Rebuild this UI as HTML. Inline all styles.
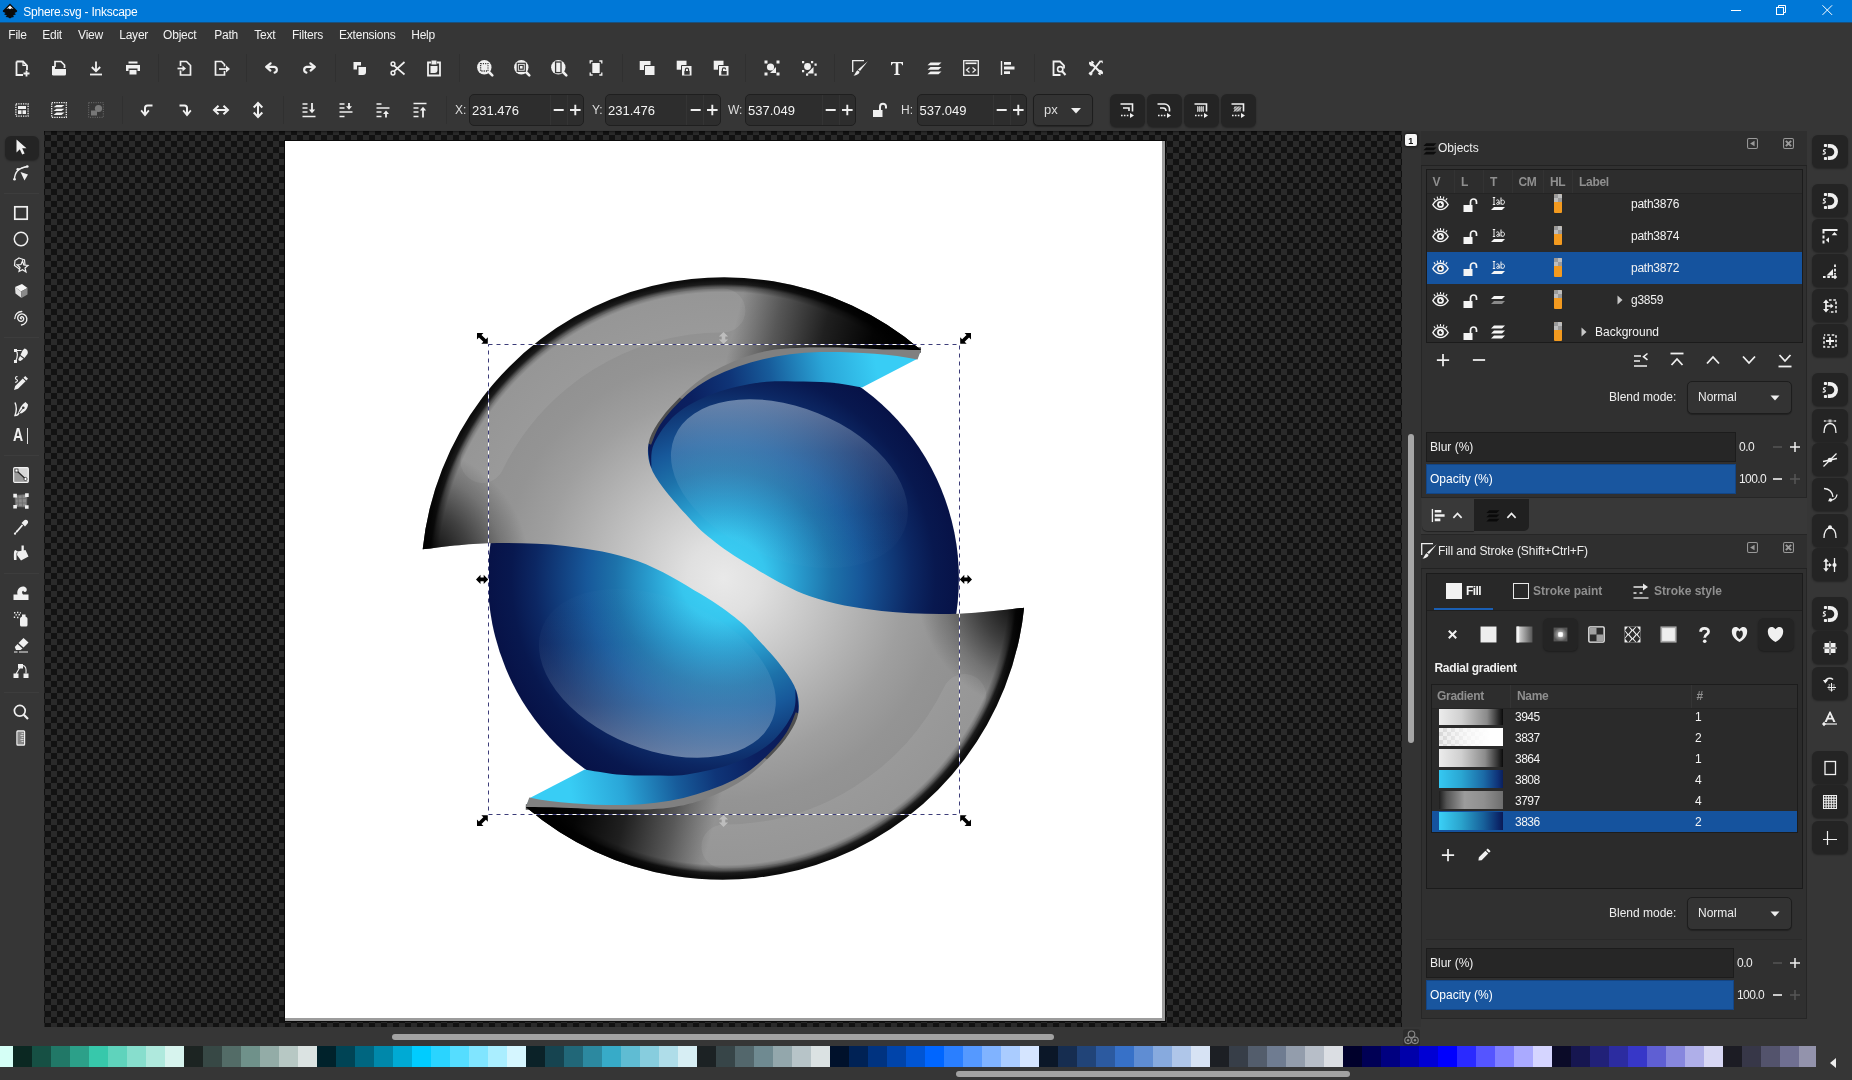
<!DOCTYPE html><html><head><meta charset="utf-8"><title>Sphere.svg - Inkscape</title><style>

html,body{margin:0;padding:0;}
body{width:1852px;height:1080px;overflow:hidden;background:#363636;position:relative;font-family:"Liberation Sans", "DejaVu Sans", sans-serif;font-size:12px;color:#eeeeec;}
.b{position:absolute;box-sizing:border-box;}
.t{position:absolute;height:20px;line-height:20px;white-space:nowrap;font-size:12px;}
.ic{position:absolute;overflow:visible;}
.m{font-size:12px;letter-spacing:-0.22px;color:#f2f2f2;}
.hd{font-weight:bold;color:#8f8f8f;letter-spacing:-0.3px;}
.dim{color:#8f8f8f;}
.btn{background:#242424;border-radius:6px;box-shadow:0 1px 2px rgba(0,0,0,.35);}
.entry{background:#2d2d2d;border:1px solid #1f1f1f;border-radius:5px;}
.combo{background:#333;border:1px solid #1d1d1d;border-radius:5px;box-shadow:0 1px 1px rgba(0,0,0,.3);}
.sep{background:#303030;width:1px;}

</style></head><body><div id="w" style="position:absolute;left:0;top:0;width:1852px;height:1080px;will-change:transform;">
<div class="b " style="left:0px;top:0px;width:1852px;height:23px;background:#0078d7;border-bottom:1px solid #1b4f7a;"></div>
<svg class="ic" style="left:1.5px;top:3.2px;color:#111;" width="16" height="16" viewBox="0 0 16 16"><path d="M8 0.500 L15 7.500 C15.500 8.200 15 9 14 9.300 L12.500 10 L14 11.200 L11 12.500 L12 14 L9.500 14.500 L8 15.500 L6 14.300 L3.500 14 L5 12.600 L2 11.300 L3.600 10 L2 9.300 C1 9 0.500 8.200 1 7.500 Z" fill="#0b0b0b"/><path d="M8 2.500 L11.500 6 L9.500 5.300 L8 6.300 L6.500 5.300 L4.500 6 Z" fill="#fff"/></svg>
<div class="t " style="left:23.3px;top:1.5px;color:#fff;font-size:12px;letter-spacing:-0.25px;">Sphere.svg - Inkscape</div>
<svg class="ic" style="left:1720px;top:0" width="132" height="22" viewBox="0 0 132 22"><g stroke="#fff" stroke-width="1" fill="none"><path d="M11 10.5h10"/><rect x="56.5" y="7.5" width="7" height="7"/><path d="M58.5 7.5v-2h7v7h-2"/><path d="M102.500 5.300l9.600 9.600M112.100 5.300l-9.600 9.600"/></g></svg>
<div class="t m" style="left:8.3px;top:24.5px;">File</div>
<div class="t m" style="left:42.2px;top:24.5px;">Edit</div>
<div class="t m" style="left:78.1px;top:24.5px;">View</div>
<div class="t m" style="left:119.2px;top:24.5px;">Layer</div>
<div class="t m" style="left:163.1px;top:24.5px;">Object</div>
<div class="t m" style="left:214.2px;top:24.5px;">Path</div>
<div class="t m" style="left:254.3px;top:24.5px;">Text</div>
<div class="t m" style="left:292px;top:24.5px;">Filters</div>
<div class="t m" style="left:339px;top:24.5px;">Extensions</div>
<div class="t m" style="left:411.2px;top:24.5px;">Help</div>
<svg class="ic" style="left:14.0px;top:60.0px;color:#f0f0f0;" width="16" height="16" viewBox="0 0 16 16"><path d="M2.500 1.500 h6.500 l4 4 v4.500 M2.500 1.500 v13.500 h6.500" fill="none" stroke="currentColor" stroke-width="1.800"/><path d="M9 1.500 v4 h4" fill="none" stroke="currentColor" stroke-width="1.200"/><path d="M12.500 10.500 v6 M9.500 13.500 h6" fill="none" stroke="currentColor" stroke-width="1.800"/></svg>
<svg class="ic" style="left:51.0px;top:60.0px;color:#f0f0f0;" width="16" height="16" viewBox="0 0 16 16"><path d="M4 7 v-5.500 h6 l3.500 3.500 v3" fill="none" stroke="currentColor" stroke-width="1.700"/><path d="M1 6 h3 v3 h11 v5 a1.500 1.500 0 0 1 -1.500 1.500 h-11 a1.500 1.500 0 0 1 -1.500 -1.500 z" fill="currentColor"/><path d="M1.800 6 v9" fill="none" stroke="currentColor" stroke-width="1.600"/></svg>
<svg class="ic" style="left:88.0px;top:60.0px;color:#f0f0f0;" width="16" height="16" viewBox="0 0 16 16"><path d="M8 1.500 v9.500 M3.800 7 l4.200 4.200 l4.200 -4.200" fill="none" stroke="currentColor" stroke-width="1.800"/><path d="M2 14.500 h12" fill="none" stroke="currentColor" stroke-width="1.800"/></svg>
<svg class="ic" style="left:125.0px;top:60.0px;color:#f0f0f0;" width="16" height="16" viewBox="0 0 16 16"><path d="M3.500 1.500 h9 v2 h-9z" fill="currentColor"/><path d="M1 5 h14 v6 h-2.500 v-2.500 h-9 v2.500 h-2.500z" fill="currentColor"/><path d="M4.500 10 h7 v4.500 h-7z" fill="currentColor"/></svg>
<svg class="ic" style="left:177.0px;top:60.0px;color:#f0f0f0;" width="16" height="16" viewBox="0 0 16 16"><path d="M3.500 6 v-4.500 h6 l4 4 v9.500 h-10 v-4.500" fill="none" stroke="currentColor" stroke-width="1.700"/><path d="M0.500 8.500 h6" fill="none" stroke="currentColor" stroke-width="1.700"/><path d="M5.500 5.500 l3.500 3 l-3.500 3z" fill="currentColor"/></svg>
<svg class="ic" style="left:213.5px;top:60.0px;color:#f0f0f0;" width="16" height="16" viewBox="0 0 16 16"><path d="M10.500 11 v4 h-9 v-13.500 h6 l3 3 v2" fill="none" stroke="currentColor" stroke-width="1.700"/><path d="M5 9 h8" fill="none" stroke="currentColor" stroke-width="1.700"/><path d="M12 5.500 l4 3.500 l-4 3.500z" fill="currentColor"/></svg>
<svg class="ic" style="left:264.0px;top:60.0px;color:#f0f0f0;" width="16" height="16" viewBox="0 0 16 16"><path d="M6.600 3.300 L2.200 6.900 L6.400 10.600" fill="none" stroke="currentColor" stroke-width="2.200" stroke-linejoin="round" stroke-linecap="round"/><path d="M2.800 6.900 H10.300 A2.900 2.900 0 0 1 10.600 12.600" fill="none" stroke="currentColor" stroke-width="2.200" stroke-linecap="round"/></svg>
<svg class="ic" style="left:301.0px;top:60.0px;color:#f0f0f0;" width="16" height="16" viewBox="0 0 16 16"><path d="M9.400 3.300 L13.800 6.900 L9.600 10.600" fill="none" stroke="currentColor" stroke-width="2.200" stroke-linejoin="round" stroke-linecap="round"/><path d="M13.200 6.900 H5.700 A2.900 2.900 0 0 0 5.400 12.600" fill="none" stroke="currentColor" stroke-width="2.200" stroke-linecap="round"/></svg>
<svg class="ic" style="left:352.0px;top:60.0px;color:#f0f0f0;" width="16" height="16" viewBox="0 0 16 16"><path d="M1.500 2 h7.500 v3.500 h-4 v4 h-3.500z" fill="currentColor"/><path d="M6.500 7 h7.500 v5 a3 3 0 0 1 -3 3 h-4.500z" fill="currentColor"/></svg>
<svg class="ic" style="left:389.5px;top:60.0px;color:#f0f0f0;" width="16" height="16" viewBox="0 0 16 16"><path d="M3.800 5.300 L14.500 14.500 M3.800 11.700 L14.500 2" fill="none" stroke="currentColor" stroke-width="1.700"/><circle cx="3" cy="4" r="1.900" fill="none" stroke="currentColor" stroke-width="1.500"/><circle cx="3" cy="13" r="1.900" fill="none" stroke="currentColor" stroke-width="1.500"/></svg>
<svg class="ic" style="left:426.0px;top:60.0px;color:#f0f0f0;" width="16" height="16" viewBox="0 0 16 16"><path d="M5 2.500 h-3 v13 h12 v-13 h-3" fill="none" stroke="currentColor" stroke-width="1.800"/><path d="M5.500 0.500 h5 v4 h-5z" fill="currentColor"/><path d="M4.500 6 h7 v4 a3 3 0 0 1 -3 3 h-4z" fill="currentColor"/></svg>
<svg class="ic" style="left:477.0px;top:60.0px;color:#f0f0f0;" width="16" height="16" viewBox="0 0 16 16"><path d="M12 12 L15.300 15.300" fill="none" stroke="currentColor" stroke-width="2.600" stroke-linecap="round"/><circle cx="7.300" cy="7.300" r="7.200" fill="currentColor"/><rect x="3.600" y="3.600" width="7.400" height="7.400" fill="none" stroke="#363636" stroke-width="1.300" stroke-dasharray="1.150 1.100"/></svg>
<svg class="ic" style="left:514.0px;top:60.0px;color:#f0f0f0;" width="16" height="16" viewBox="0 0 16 16"><path d="M12 12 L15.300 15.300" fill="none" stroke="currentColor" stroke-width="2.600" stroke-linecap="round"/><circle cx="7.300" cy="7.300" r="7.200" fill="currentColor"/><rect x="3.300" y="3.300" width="8" height="8" fill="none" stroke="#363636" stroke-width="1.200"/><rect x="5.400" y="5.400" width="3.800" height="3.800" fill="none" stroke="#363636" stroke-width="1.200"/></svg>
<svg class="ic" style="left:551.0px;top:60.0px;color:#f0f0f0;" width="16" height="16" viewBox="0 0 16 16"><path d="M12 12 L15.300 15.300" fill="none" stroke="currentColor" stroke-width="2.600" stroke-linecap="round"/><circle cx="7.300" cy="7.300" r="7.200" fill="currentColor"/><rect x="4.600" y="2" width="5.400" height="10.600" fill="none" stroke="#363636" stroke-width="1.300"/></svg>
<svg class="ic" style="left:588.0px;top:60.0px;color:#f0f0f0;" width="16" height="16" viewBox="0 0 16 16"><rect x="4.300" y="3" width="7.400" height="10" fill="currentColor"/><path d="M2.200 3.500 v-2.500 h2.500 M13.800 3.500 v-2.500 h-2.500 M2.200 12.500 v2.500 h2.500 M13.800 12.500 v2.500 h-2.500" fill="none" stroke="currentColor" stroke-width="1.300"/></svg>
<svg class="ic" style="left:638.5px;top:60.0px;color:#f0f0f0;" width="16" height="16" viewBox="0 0 16 16"><path d="M0.700 1 h10.800 v9 h-10.800z" fill="currentColor"/><path d="M5.500 5.500 h10.500 v10 h-10.500z" fill="currentColor" stroke="#363636" stroke-width="1"/></svg>
<svg class="ic" style="left:675.5px;top:60.0px;color:#f0f0f0;" width="16" height="16" viewBox="0 0 16 16"><path d="M0.700 0.700 h9.800 v9 h-9.800z" fill="currentColor"/><path d="M5.500 5.500 h10.500 v10.500 h-10.500z" fill="currentColor" stroke="#363636" stroke-width="1"/><path d="M8.300 11 h5.400 v3.700 h-5.400z" fill="#363636"/><path d="M9.400 11 v-1.300 a1.600 1.600 0 0 1 3.200 0 v1.300" fill="none" stroke="#363636" stroke-width="1.200"/></svg>
<svg class="ic" style="left:712.5px;top:60.0px;color:#f0f0f0;" width="16" height="16" viewBox="0 0 16 16"><path d="M0.700 0.700 h9.800 v9 h-9.800z" fill="currentColor"/><path d="M5.500 5.500 h10.500 v10.500 h-10.500z" fill="currentColor" stroke="#363636" stroke-width="1"/><path d="M8.300 11 h5.400 v3.700 h-5.400z" fill="#363636"/><path d="M9.400 11 v-1.600 a1.600 1.600 0 0 1 3.200 0" fill="none" stroke="#363636" stroke-width="1.200"/></svg>
<svg class="ic" style="left:764.0px;top:60.0px;color:#f0f0f0;" width="16" height="16" viewBox="0 0 16 16"><circle cx="6.500" cy="7" r="3.600" fill="currentColor"/><path d="M12 7 v6 h-6 z" fill="currentColor"/><path d="M0.500 0.500 h3 v3 h-3z M12.500 0.500 h3 v3 h-3z M0.500 12.500 h3 v3 h-3z M12.500 12.500 h3 v3 h-3z" fill="currentColor"/></svg>
<svg class="ic" style="left:801.0px;top:60.0px;color:#f0f0f0;" width="16" height="16" viewBox="0 0 16 16"><circle cx="6.500" cy="6.500" r="3.400" fill="currentColor"/><path d="M12.500 7 v6.500 h-6.500 z" fill="currentColor"/><path d="M1 1 h2.200 v2.200 h-2.200z M10 1 h2.200 v2.200 h-2.200z M1 10 h2.200 v2.200 h-2.200z M13.500 3.500 h2.200 v2.200 h-2.200z M5 13.500 h2.200 v2.200 h-2.200z M13.500 13.500 h2.200 v2.200 h-2.200z" fill="currentColor"/></svg>
<svg class="ic" style="left:852.0px;top:60.0px;color:#f0f0f0;" width="16" height="16" viewBox="0 0 16 16"><path d="M12 0.700 h-11.300 v11.300" fill="none" stroke="currentColor" stroke-width="1.300"/><path d="M15.800 1.200 L8 11 L6 9.600 Z" fill="currentColor"/><path d="M5.500 10.200 l2 1.600 c0 2 -2.500 3.700 -6 3.700 c1.800 -1 2 -3.800 4 -5.300z" fill="currentColor"/></svg>
<svg class="ic" style="left:889.0px;top:60.0px;color:#f0f0f0;" width="16" height="16" viewBox="0 0 16 16"><path d="M2 2 h12 v3.200 h-0.800 c-0.300 -1.400 -0.900 -1.900 -2.200 -1.900 h-1.700 v9.700 c0 0.900 0.400 1.200 1.700 1.300 v0.700 h-6 v-0.700 c1.300 -0.100 1.700 -0.400 1.700 -1.300 v-9.700 h-1.700 c-1.300 0 -1.900 0.500 -2.200 1.900 h-0.800z" fill="currentColor"/></svg>
<svg class="ic" style="left:926.0px;top:60.0px;color:#f0f0f0;" width="16" height="16" viewBox="0 0 16 16"><path d="M4.500 2.500 h11 l-3 2.800 h-11z M4.500 7 h11 l-3 2.800 h-11z M4.500 11.500 h11 l-3 2.800 h-11z" fill="currentColor"/></svg>
<svg class="ic" style="left:963.0px;top:60.0px;color:#f0f0f0;" width="16" height="16" viewBox="0 0 16 16"><rect x="0.700" y="0.700" width="14.600" height="14.600" fill="none" stroke="currentColor" stroke-width="1.300"/><path d="M2.500 3.300 h11" fill="none" stroke="currentColor" stroke-width="1.600"/><path d="M6.500 7.500 l-3 2.500 l3 2.500 M9.500 7.500 l3 2.500 l-3 2.500" fill="none" stroke="currentColor" stroke-width="1.200"/></svg>
<svg class="ic" style="left:999.5px;top:60.0px;color:#f0f0f0;" width="16" height="16" viewBox="0 0 16 16"><path d="M1.500 1 v14" fill="none" stroke="currentColor" stroke-width="1.400"/><path d="M4 2 h7 v2.800 h-7z M4 6.600 h10.500 v2.800 h-10.500z M4 11.200 h6 v2.800 h-6z" fill="currentColor"/></svg>
<svg class="ic" style="left:1051.0px;top:60.0px;color:#f0f0f0;" width="16" height="16" viewBox="0 0 16 16"><path d="M9.500 15 h-7 v-13.500 h6.500 l4 4 v3" fill="none" stroke="currentColor" stroke-width="1.800"/><circle cx="9.200" cy="9.200" r="2.600" fill="none" stroke="currentColor" stroke-width="1.600"/><path d="M11 11 l3.500 4" fill="none" stroke="currentColor" stroke-width="2"/></svg>
<svg class="ic" style="left:1088.0px;top:60.0px;color:#f0f0f0;" width="16" height="16" viewBox="0 0 16 16"><path d="M12.500 1 L3 13" fill="none" stroke="currentColor" stroke-width="2"/><path d="M11.500 0.800 l3 -0.300 l0.500 3z" fill="currentColor"/><path d="M2 11.500 l2.800 2.200 l-1.800 2 l-2.500 -2z" fill="currentColor"/><path d="M4 4 L12 12" fill="none" stroke="currentColor" stroke-width="2.200"/><path d="M1.200 1.800 a3.200 3.200 0 0 0 4.600 4 l-1.200 -3.400z M14.800 14.200 a3.200 3.200 0 0 0 -4.600 -4 l1.200 3.400z" fill="currentColor"/><path d="M3 0.800 l1 2.700 l2.200 -0.500 a3.200 3.200 0 0 0 -3.200 -2.200z M13 15.200 l-1 -2.700 l-2.200 0.500 a3.200 3.200 0 0 0 3.200 2.200z" fill="currentColor"/></svg>
<div class="b sep" style="left:158px;top:54px;width:1px;height:28px;"></div>
<div class="b sep" style="left:246px;top:54px;width:1px;height:28px;"></div>
<div class="b sep" style="left:335px;top:54px;width:1px;height:28px;"></div>
<div class="b sep" style="left:459px;top:54px;width:1px;height:28px;"></div>
<div class="b sep" style="left:622px;top:54px;width:1px;height:28px;"></div>
<div class="b sep" style="left:745px;top:54px;width:1px;height:28px;"></div>
<div class="b sep" style="left:833.5px;top:54px;width:1px;height:28px;"></div>
<div class="b sep" style="left:1033.5px;top:54px;width:1px;height:28px;"></div>
<svg class="ic" style="left:13.5px;top:102.0px;color:#f0f0f0;" width="16" height="16" viewBox="0 0 16 16"><rect x="1.900" y="1.900" width="12.200" height="12.200" fill="none" stroke="currentColor" stroke-width="1.300" stroke-dasharray="1.300 1.050"/><path d="M4 4 h8 v3 h-8z M4 8.200 h3.500 v3.800 h-3.500z M8.500 8.200 h3.500 v3.800 h-3.500z" fill="currentColor"/></svg>
<svg class="ic" style="left:50.5px;top:102.0px;color:#f0f0f0;" width="16" height="16" viewBox="0 0 16 16"><rect x="0.700" y="0.700" width="14.600" height="14.600" fill="none" stroke="currentColor" stroke-width="1.300" stroke-dasharray="1.300 1.050"/><path d="M5.500 3 h8 l-3 2.300 h-8z M5.500 6.800 h8 l-3 2.300 h-8z M5.500 10.600 h8 l-3 2.300 h-8z" fill="currentColor"/></svg>
<svg class="ic" style="left:87.5px;top:102.0px;color:#777;" width="16" height="16" viewBox="0 0 16 16"><rect x="0.700" y="0.700" width="14.600" height="14.600" fill="none" stroke="currentColor" stroke-width="0.900" stroke-dasharray="1 1.300"/><circle cx="10.500" cy="6.500" r="3.600" fill="currentColor"/><path d="M3 8.500 h6 v5 h-6z" fill="currentColor"/></svg>
<svg class="ic" style="left:138.5px;top:102.0px;color:#f0f0f0;" width="16" height="16" viewBox="0 0 16 16"><path d="M13.500 3.500 h-5 a2.500 2.500 0 0 0 -2.500 2.500 v6" fill="none" stroke="currentColor" stroke-width="2"/><path d="M1.500 9 l4.500 5.500 l4.500 -5.500 l-1.300 -1.200 l-3.200 3.600 l-3.200 -3.600z" fill="currentColor"/></svg>
<svg class="ic" style="left:176.5px;top:102.0px;color:#f0f0f0;" width="16" height="16" viewBox="0 0 16 16"><path d="M2.500 3.500 h5 a2.500 2.500 0 0 1 2.500 2.500 v6" fill="none" stroke="currentColor" stroke-width="2"/><path d="M14.500 9 l-4.500 5.500 l-4.500 -5.500 l1.300 -1.200 l3.200 3.600 l3.200 -3.600z" fill="currentColor"/></svg>
<svg class="ic" style="left:213.0px;top:102.0px;color:#f0f0f0;" width="16" height="16" viewBox="0 0 16 16"><path d="M2.500 8 h11" fill="none" stroke="currentColor" stroke-width="2"/><path d="M5.500 3.700 l-4.500 4.300 l4.500 4.300 M10.500 3.700 l4.500 4.300 l-4.500 4.300" fill="none" stroke="currentColor" stroke-width="2"/></svg>
<svg class="ic" style="left:250.0px;top:102.0px;color:#f0f0f0;" width="16" height="16" viewBox="0 0 16 16"><path d="M8 2.500 v11" fill="none" stroke="currentColor" stroke-width="2"/><path d="M3.700 5.500 l4.300 -4.500 l4.300 4.500 M3.700 10.500 l4.300 4.500 l4.300 -4.500" fill="none" stroke="currentColor" stroke-width="2"/></svg>
<svg class="ic" style="left:300.5px;top:102.0px;color:#f0f0f0;" width="16" height="16" viewBox="0 0 16 16"><path d="M1.500 2 h5 M1.500 6 h5 M1.500 10 h5 M1.500 14.500 h13" fill="none" stroke="currentColor" stroke-width="1.700"/><path d="M11 1 v9" fill="none" stroke="currentColor" stroke-width="1.800"/><path d="M7.800 7.500 l3.200 3.700 l3.200 -3.700z" fill="currentColor"/></svg>
<svg class="ic" style="left:337.5px;top:102.0px;color:#f0f0f0;" width="16" height="16" viewBox="0 0 16 16"><path d="M1.500 2 h5 M1.500 6 h5 M1.500 10 h13 M1.500 14.500 h5" fill="none" stroke="currentColor" stroke-width="1.700"/><path d="M11 1 v5" fill="none" stroke="currentColor" stroke-width="1.800"/><path d="M8 4.300 l3 3.500 l3 -3.500z" fill="currentColor"/></svg>
<svg class="ic" style="left:374.5px;top:102.0px;color:#f0f0f0;" width="16" height="16" viewBox="0 0 16 16"><path d="M1.500 2 h5 M1.500 6 h13 M1.500 10 h5 M1.500 14.500 h5" fill="none" stroke="currentColor" stroke-width="1.700"/><path d="M11 11 v4.500" fill="none" stroke="currentColor" stroke-width="1.800"/><path d="M8 12 l3 -3.500 l3 3.500z" fill="currentColor"/></svg>
<svg class="ic" style="left:411.5px;top:102.0px;color:#f0f0f0;" width="16" height="16" viewBox="0 0 16 16"><path d="M1.500 1.500 h13 M1.500 6 h5 M1.500 10 h5 M1.500 14.500 h5" fill="none" stroke="currentColor" stroke-width="1.700"/><path d="M11 7 v8.500" fill="none" stroke="currentColor" stroke-width="1.800"/><path d="M7.800 8.500 l3.200 -3.700 l3.200 3.700z" fill="currentColor"/></svg>
<div class="b sep" style="left:122px;top:96px;width:1px;height:28px;"></div>
<div class="b sep" style="left:283px;top:96px;width:1px;height:28px;"></div>
<div class="b sep" style="left:446px;top:96px;width:1px;height:28px;"></div>
<div class="t " style="left:455px;top:100px;color:#ddd;">X:</div>
<div class="b entry" style="left:469px;top:94px;width:115px;height:32px;"></div>
<div class="t " style="left:472px;top:100.5px;font-size:13px;color:#f4f4f4;">231.476</div>
<div class="b " style="left:549.5px;top:95px;width:1px;height:30px;background:#343434;"></div>
<div class="b " style="left:566.5px;top:95px;width:1px;height:30px;background:#343434;"></div>
<svg class="ic" style="left:553px;top:104px" width="40" height="12" viewBox="0 0 40 12"><path d="M0.700 6h10M17 6h10.600M22.300 0.700v10.600" stroke="#eee" stroke-width="1.9" fill="none"/></svg>
<div class="t " style="left:592px;top:100px;color:#ddd;">Y:</div>
<div class="b entry" style="left:605px;top:94px;width:115.5px;height:32px;"></div>
<div class="t " style="left:608px;top:100.5px;font-size:13px;color:#f4f4f4;">231.476</div>
<div class="b " style="left:686px;top:95px;width:1px;height:30px;background:#343434;"></div>
<div class="b " style="left:703px;top:95px;width:1px;height:30px;background:#343434;"></div>
<svg class="ic" style="left:689.5px;top:104px" width="40" height="12" viewBox="0 0 40 12"><path d="M0.700 6h10M17 6h10.600M22.300 0.700v10.600" stroke="#eee" stroke-width="1.9" fill="none"/></svg>
<div class="t " style="left:728px;top:100px;color:#ddd;">W:</div>
<div class="b entry" style="left:745px;top:94px;width:111px;height:32px;"></div>
<div class="t " style="left:748px;top:100.5px;font-size:13px;color:#f4f4f4;">537.049</div>
<div class="b " style="left:821.5px;top:95px;width:1px;height:30px;background:#343434;"></div>
<div class="b " style="left:838.5px;top:95px;width:1px;height:30px;background:#343434;"></div>
<svg class="ic" style="left:825px;top:104px" width="40" height="12" viewBox="0 0 40 12"><path d="M0.700 6h10M17 6h10.600M22.300 0.700v10.600" stroke="#eee" stroke-width="1.9" fill="none"/></svg>
<svg class="ic" style="left:872.0px;top:102.0px;color:#f0f0f0;" width="16" height="16" viewBox="0 0 16 16"><path d="M1 8 h9.500 v7 h-9.500z" fill="currentColor"/><path d="M8 8 v-3.300 a3 3 0 0 1 6 0 v1.800" fill="none" stroke="currentColor" stroke-width="2"/></svg>
<div class="t " style="left:901px;top:100px;color:#ddd;">H:</div>
<div class="b entry" style="left:916.5px;top:94px;width:110.5px;height:32px;"></div>
<div class="t " style="left:919.5px;top:100.5px;font-size:13px;color:#f4f4f4;">537.049</div>
<div class="b " style="left:992.5px;top:95px;width:1px;height:30px;background:#343434;"></div>
<div class="b " style="left:1009.5px;top:95px;width:1px;height:30px;background:#343434;"></div>
<svg class="ic" style="left:996px;top:104px" width="40" height="12" viewBox="0 0 40 12"><path d="M0.700 6h10M17 6h10.600M22.300 0.700v10.600" stroke="#eee" stroke-width="1.9" fill="none"/></svg>
<div class="b combo" style="left:1033px;top:94px;width:60px;height:32px;"></div>
<div class="t " style="left:1044px;top:100px;font-size:13px;color:#ddd;">px</div>
<svg class="ic" style="left:1070px;top:107px" width="12" height="7" viewBox="0 0 12 7"><path d="M1 1h10l-5 5.500z" fill="#eee"/></svg>
<div class="b btn" style="left:1109.5px;top:93.5px;width:35px;height:33px;"></div>
<svg class="ic" style="left:1119.0px;top:102.0px;color:#f0f0f0;" width="16" height="16" viewBox="0 0 16 16"><path d="M1.500 2 h12 v7.500 M4 6 h6 v3" fill="none" stroke="currentColor" stroke-width="1.600"/><path d="M2 13.500 h8" fill="none" stroke="currentColor" stroke-width="1.500" stroke-dasharray="1.600 1.300"/><path d="M11 11 l4 2.500 l-4 2.500z" fill="currentColor"/></svg>
<div class="b btn" style="left:1146.5px;top:93.5px;width:35px;height:33px;"></div>
<svg class="ic" style="left:1156.0px;top:102.0px;color:#f0f0f0;" width="16" height="16" viewBox="0 0 16 16"><path d="M1.500 2 h7 a5 5 0 0 1 5 5 v2.500 M4 6 h3 a3 3 0 0 1 3 3" fill="none" stroke="currentColor" stroke-width="1.600"/><path d="M2 13.500 h8" fill="none" stroke="currentColor" stroke-width="1.500" stroke-dasharray="1.600 1.300"/><path d="M11 11 l4 2.500 l-4 2.500z" fill="currentColor"/></svg>
<div class="b btn" style="left:1183.5px;top:93.5px;width:35px;height:33px;"></div>
<svg class="ic" style="left:1193.0px;top:102.0px;color:#f0f0f0;" width="16" height="16" viewBox="0 0 16 16"><path d="M1.500 2 h12 v7.500" fill="none" stroke="currentColor" stroke-width="1.600"/><path d="M4 4.500 h7 v5 h-7z" fill="currentColor" opacity=".55"/><path d="M4 5 h7 M4 7 h7 M4 9 h7" fill="none" stroke="currentColor" stroke-width="1" stroke-dasharray="1 1"/><path d="M2 13.500 h8" fill="none" stroke="currentColor" stroke-width="1.500" stroke-dasharray="1.600 1.300"/><path d="M11 11 l4 2.500 l-4 2.500z" fill="currentColor"/></svg>
<div class="b btn" style="left:1220.5px;top:93.5px;width:35px;height:33px;"></div>
<svg class="ic" style="left:1230.0px;top:102.0px;color:#f0f0f0;" width="16" height="16" viewBox="0 0 16 16"><path d="M1.500 2 h12 v7.500" fill="none" stroke="currentColor" stroke-width="1.600"/><path d="M4 4.500 h7 v5 h-7z" fill="currentColor" opacity=".45"/><path d="M4 9.500 l5 -5 M7 9.500 l4 -4 M4 6.500 l2 -2" fill="none" stroke="currentColor" stroke-width="1"/><path d="M2 13.500 h8" fill="none" stroke="currentColor" stroke-width="1.500" stroke-dasharray="1.600 1.300"/><path d="M11 11 l4 2.500 l-4 2.500z" fill="currentColor"/></svg>
<div class="b btn" style="left:4.5px;top:135.5px;width:34px;height:24px;"></div>
<svg class="ic" style="left:13.0px;top:139.0px;color:#f0f0f0;" width="16" height="16" viewBox="0 0 16 16"><path d="M3.500 0.500 L3.500 13.500 L6.800 10.300 L9.200 15.500 L11.600 14.400 L9.200 9.300 L13.500 9.300 Z" fill="currentColor"/></svg>
<svg class="ic" style="left:13.0px;top:165.0px;color:#f0f0f0;" width="16" height="16" viewBox="0 0 16 16"><path d="M1.500 14.500 C1.500 7.500 5 3 14 1.500" fill="none" stroke="currentColor" stroke-width="1.300"/><circle cx="1.500" cy="14.200" r="1.300" fill="currentColor"/><circle cx="4.800" cy="4.300" r="1.300" fill="currentColor"/><circle cx="14.300" cy="1.500" r="1.300" fill="currentColor"/><path d="M4.800 4.300 L14.300 1.500" fill="none" stroke="currentColor" stroke-width="0.900"/><path d="M7.500 7 L15 9.500 L11.500 15.500 Z" fill="currentColor"/></svg>
<svg class="ic" style="left:13.0px;top:205.0px;color:#f0f0f0;" width="16" height="16" viewBox="0 0 16 16"><rect x="1.800" y="1.800" width="12.400" height="12.400" fill="none" stroke="currentColor" stroke-width="1.700"/></svg>
<svg class="ic" style="left:13.0px;top:231.0px;color:#f0f0f0;" width="16" height="16" viewBox="0 0 16 16"><circle cx="8" cy="8" r="6.700" fill="none" stroke="currentColor" stroke-width="1.500"/></svg>
<svg class="ic" style="left:13.0px;top:257.0px;color:#f0f0f0;" width="16" height="16" viewBox="0 0 16 16"><path d="M6 1 L11.500 3 L12 8 L7 12.500 L1.500 8.500 L2 3.500 Z" fill="none" stroke="currentColor" stroke-width="1.200"/><path d="M9.500 4 L10.800 8 L15 8.500 L12 11 L13 15 L9.500 12.800 L6 14.500 L7 10.500 L4 7.800 L8 7.500 Z" fill="#363636" stroke="currentColor" stroke-width="1.200"/></svg>
<svg class="ic" style="left:13.0px;top:283.0px;color:#f0f0f0;" width="16" height="16" viewBox="0 0 16 16"><path d="M2 4 L9 1 L14.500 5 L8 8.500 Z" fill="#f4f4f4"/><path d="M2 4 L8 8.500 L8.500 15 L2.500 10.500 Z" fill="#e0e0e0"/><path d="M8 8.500 L14.500 5 L14.500 11.500 L8.500 15 Z" fill="#8a8a8a"/></svg>
<svg class="ic" style="left:13.0px;top:310.0px;color:#f0f0f0;" width="16" height="16" viewBox="0 0 16 16"><path d="M8.300 8.800 C7.300 8.800 7 7.200 8.300 6.800 C10 6.400 11 8 10.600 9.500 C10 11.500 7.500 12 5.800 10.500 C3.800 8.700 4.500 5.500 7 4.300 C10 3 13.300 5 13.800 8.300 C14.200 11.500 12 14.500 8.500 15" fill="none" stroke="currentColor" stroke-width="1.400" stroke-linecap="round"/><path d="M1.800 8.500 C1.800 4.500 5 1.500 8.800 1.500" fill="none" stroke="currentColor" stroke-width="1.300" stroke-linecap="round"/></svg>
<svg class="ic" style="left:13.0px;top:348.0px;color:#f0f0f0;" width="16" height="16" viewBox="0 0 16 16"><path d="M2.500 2 C5 4 5 9 2.500 13.500" fill="none" stroke="currentColor" stroke-width="1.200"/><path d="M1 1 h3 v3 h-3z M1 12 h3 v3 h-3z" fill="currentColor"/><path d="M2.500 2.500 h6" fill="none" stroke="currentColor" stroke-width="1"/><path d="M11.500 0.500 C14 1 15.500 3.500 14.500 6 L11.500 10 L7.500 7 L9.500 2.500 Z" fill="currentColor"/><path d="M7 8 L10.500 10.800 L7.500 13 C6 13 5 12 5.500 11 Z" fill="currentColor"/></svg>
<svg class="ic" style="left:13.0px;top:375.0px;color:#f0f0f0;" width="16" height="16" viewBox="0 0 16 16"><path d="M12.200 1 L15 3.800 L13.300 5.500 L10.500 2.700 Z" fill="currentColor"/><path d="M9.800 3.400 L12.600 6.200 L5 13.800 L1 15 L2.200 11 Z" fill="currentColor"/><path d="M4.500 1.500 C2.500 1.500 1.500 3.500 3.500 4.500 C5.500 5.300 4 7.500 2 7.300" fill="none" stroke="currentColor" stroke-width="1.100"/></svg>
<svg class="ic" style="left:13.0px;top:401.0px;color:#f0f0f0;" width="16" height="16" viewBox="0 0 16 16"><path d="M2 1.500 C3.500 5 3.500 10.500 2 14.500 C4.500 14.500 6 12.500 6.500 10.500" fill="none" stroke="currentColor" stroke-width="1.400"/><path d="M12.500 1 L15 3.500 C15 7 12.500 10.500 8 12.500 L5.500 11.500 C6 8 8.500 3.500 12.500 1 Z" fill="currentColor"/><circle cx="10.300" cy="6.800" r="1.300" fill="#363636"/><path d="M6 12 L10.300 6.800" stroke="#363636" stroke-width="0.900"/></svg>
<div class="t " style="left:13px;top:425.3px;font-weight:bold;font-size:18.5px;color:#f0f0f0;transform:scaleX(0.76);transform-origin:0 50%;">A</div>
<div class="b " style="left:26.6px;top:427.5px;width:1.2px;height:16px;background:#e0e0e0;"></div>
<svg class="ic" style="left:13.0px;top:467.0px;color:#f0f0f0;" width="16" height="16" viewBox="0 0 16 16"><rect x="0.700" y="0.700" width="14.600" height="14.600" rx="1" fill="#d6d6d6" stroke="#f2f2f2" stroke-width="1.200"/><path d="M1.300 1.300 L14.700 14.700 L1.300 14.700 Z" fill="#9a9a9a"/><path d="M3.500 3.500 L12.500 12" stroke="#1e1e1e" stroke-width="1.100"/><rect x="2" y="2" width="3" height="3" fill="#fff" stroke="#1e1e1e" stroke-width=".7"/><circle cx="12.500" cy="12" r="1.600" fill="#fff" stroke="#1e1e1e" stroke-width=".7"/></svg>
<svg class="ic" style="left:13.0px;top:493.0px;color:#f0f0f0;" width="16" height="16" viewBox="0 0 16 16"><path d="M2 2.500 L14 1.500 L13.500 14 L2.500 13.500 Z" fill="#8a8a8a"/><path d="M2 2.500 L14 1.500 L13.500 14 L2.500 13.500 Z M5 2 L5.500 13.800 M9 2 L9.500 14 M2 6 L14 5.500 M2.300 10 L13.800 10" fill="none" stroke="#6a6a6a" stroke-width=".8"/><path d="M0.300 0.800 h3.600 v3.600 h-3.600z M12.100 0.300 h3.600 v3.600 h-3.600z M0.300 12 h3.600 v3.600 h-3.600z M12 12.200 h3.600 v3.600 h-3.600z" fill="currentColor"/></svg>
<svg class="ic" style="left:13.0px;top:519.0px;color:#f0f0f0;" width="16" height="16" viewBox="0 0 16 16"><path d="M12.500 0.800 C14.500 0.800 15.500 2.500 15 4 L12 7.500 L8.500 4 L11 1.500 C11.500 1 12 0.800 12.500 0.800 Z" fill="currentColor"/><path d="M9.500 6 L3.500 13" fill="none" stroke="currentColor" stroke-width="1.800"/><path d="M4.300 11.500 L2 15" fill="none" stroke="currentColor" stroke-width="1.200"/><circle cx="2" cy="14.700" r="1.100" fill="currentColor"/></svg>
<svg class="ic" style="left:13.0px;top:545.0px;color:#f0f0f0;" width="16" height="16" viewBox="0 0 16 16"><path d="M8.500 0.500 h2.300 v7 h-2.300z" fill="currentColor"/><path d="M4.500 6.500 L12.500 5 L15.500 11.500 L8 15.500 L4 10 Z" fill="currentColor"/><path d="M2.200 5 C0.800 6 0.800 8 1 15 h2.500 V9 C3.500 7.500 4 7 5 6.500" fill="currentColor"/></svg>
<svg class="ic" style="left:13.0px;top:585.0px;color:#f0f0f0;" width="16" height="16" viewBox="0 0 16 16"><path d="M0.500 15 v-5.500 h4 C3.500 5.500 6 1.500 10 1.500 C13 1.500 14.500 4 13.500 6 C12.800 7.300 10.500 7.300 10.300 5.800 C9 5.500 8.500 8 10 9.500 h5.500 v5.500 Z" fill="currentColor"/></svg>
<svg class="ic" style="left:13.0px;top:611.0px;color:#f0f0f0;" width="16" height="16" viewBox="0 0 16 16"><path d="M7 8 C7 6.500 8 6 9 5.500 v-2 h3.500 v2 C13.500 6 14.500 6.500 14.500 8 v6 a1.500 1.500 0 0 1 -1.500 1.500 h-4.500 a1.500 1.500 0 0 1 -1.500 -1.500 z" fill="currentColor"/><path d="M1 1 h1.400 v1.400 h-1.400z M4 0.800 h1.400 v1.400 h-1.400z M2.500 3.200 h1.400 v1.400 h-1.400z M5.500 3 h1.400 v1.400 h-1.400z M0.800 5.500 h1.400 v1.400 h-1.400z M4 5.800 h1.400 v1.400 h-1.400z M6.800 1.200 h1.200 v1.200 h-1.200z" fill="currentColor"/></svg>
<svg class="ic" style="left:13.0px;top:637.0px;color:#f0f0f0;" width="16" height="16" viewBox="0 0 16 16"><path d="M10.500 1 L15.500 5.500 L10.500 10.500 L5.500 6 Z" fill="currentColor"/><path d="M4.500 7 L9.500 11.500 L7.500 13 L3 13 L1.800 10 Z" fill="currentColor"/><path d="M1 15 h3.500 M6 15 h9" fill="none" stroke="currentColor" stroke-width="1.200"/></svg>
<svg class="ic" style="left:13.0px;top:663.0px;color:#f0f0f0;" width="16" height="16" viewBox="0 0 16 16"><path d="M5 1 h5 v4.500 h-5z M0.500 10.500 h5 v4.500 h-5z M10.500 10.500 h5 v4.500 h-5z" fill="currentColor"/><path d="M6.500 5 L3 11 M10 2.500 C13 3 13.500 6 13 10.500" fill="none" stroke="currentColor" stroke-width="1.100"/></svg>
<svg class="ic" style="left:13.0px;top:704.0px;color:#f0f0f0;" width="16" height="16" viewBox="0 0 16 16"><circle cx="6.800" cy="6.800" r="5.400" fill="none" stroke="currentColor" stroke-width="1.700"/><path d="M10.800 10.800 L15 15" fill="none" stroke="currentColor" stroke-width="2.200"/></svg>
<svg class="ic" style="left:13.0px;top:730.0px;color:#f0f0f0;" width="16" height="16" viewBox="0 0 16 16"><rect x="4" y="1" width="7.500" height="14" rx="0.800" fill="none" stroke="currentColor" stroke-width="1.400"/><path d="M5 1.700 h5.500 v12.600 h-5.500z" fill="currentColor" opacity=".45"/><path d="M10.500 3.500 h-2 M10.500 5.500 h-3 M10.500 7.500 h-2 M10.500 9.500 h-3 M10.500 11.500 h-2" fill="none" stroke="currentColor" stroke-width=".7"/></svg>
<div class="b " style="left:4px;top:192.5px;width:35px;height:1px;background:#3d3d3d;"></div>
<div class="b " style="left:4px;top:336.5px;width:35px;height:1px;background:#3d3d3d;"></div>
<div class="b " style="left:4px;top:455px;width:35px;height:1px;background:#3d3d3d;"></div>
<div class="b " style="left:4px;top:573px;width:35px;height:1px;background:#3d3d3d;"></div>
<div class="b " style="left:4px;top:691.5px;width:35px;height:1px;background:#3d3d3d;"></div>
<div class="b " style="left:44px;top:131px;width:1357.5px;height:896px;background-color:#121212;background-image:linear-gradient(45deg,#2a2a2a 25%,transparent 25%,transparent 75%,#2a2a2a 75%),linear-gradient(45deg,#2a2a2a 25%,transparent 25%,transparent 75%,#2a2a2a 75%);background-size:12px 12px;background-position:-5px -2px,1px 4px;box-shadow:inset 0 1px 2px rgba(0,0,0,.5);"></div>
<div class="b " style="left:284.8px;top:140.7px;width:880.4px;height:880.4px;background:#9c9c9c;box-shadow:0 0 0 1px #0a0a0a;"></div>
<div class="b " style="left:284.8px;top:140.7px;width:877.3px;height:877.5px;background:#fff;"></div>
<svg class="ic" style="left:0;top:0" width="1852" height="1080" viewBox="0 0 1852 1080">
<defs>
<radialGradient id="gB" gradientUnits="userSpaceOnUse" cx="723.4" cy="578.5" r="235.5">
<stop offset="0" stop-color="#3fd4f7"/>
<stop offset="0.18" stop-color="#36c6ee"/>
<stop offset="0.32" stop-color="#289bcd"/>
<stop offset="0.46" stop-color="#1d72aa"/>
<stop offset="0.58" stop-color="#17589a"/>
<stop offset="0.7" stop-color="#113d7c"/>
<stop offset="0.8" stop-color="#0c2763"/>
<stop offset="0.9" stop-color="#08184f"/>
<stop offset="1" stop-color="#071247"/>
</radialGradient>
<radialGradient id="gS" gradientUnits="userSpaceOnUse" cx="723.4" cy="578.5" r="303.0">
<stop offset="0" stop-color="#e9e9e9"/>
<stop offset="0.12" stop-color="#e0e0e0"/>
<stop offset="0.3" stop-color="#c7c7c7"/>
<stop offset="0.47" stop-color="#b0b0b0"/>
<stop offset="0.6" stop-color="#9f9f9f"/>
<stop offset="0.73" stop-color="#949494"/>
<stop offset="0.945" stop-color="#8e8e8e"/>
<stop offset="0.962" stop-color="#5a5a5a"/>
<stop offset="0.972" stop-color="#1c1c1c"/>
<stop offset="0.985" stop-color="#0e0e0e"/>
<stop offset="1" stop-color="#0a0a0a"/>
</radialGradient>
<linearGradient id="gT" gradientUnits="userSpaceOnUse" x1="740" y1="305" x2="895" y2="345"><stop offset="0" stop-color="#000" stop-opacity="0"/><stop offset="0.25" stop-color="#000" stop-opacity="0.4"/><stop offset="0.55" stop-color="#000" stop-opacity="0.78"/><stop offset="0.85" stop-color="#000" stop-opacity="0.97"/><stop offset="1" stop-color="#000" stop-opacity="1"/></linearGradient>
<radialGradient id="gL" gradientUnits="userSpaceOnUse" cx="405" cy="570" r="125"><stop offset="0" stop-color="#000" stop-opacity="1"/><stop offset="0.3" stop-color="#000" stop-opacity="0.85"/><stop offset="0.55" stop-color="#000" stop-opacity="0.55"/><stop offset="0.8" stop-color="#000" stop-opacity="0.2"/><stop offset="1" stop-color="#000" stop-opacity="0"/></radialGradient>
<linearGradient id="gI" gradientUnits="userSpaceOnUse" x1="880" y1="385" x2="650" y2="430"><stop offset="0" stop-color="#38cdf5"/><stop offset="0.22" stop-color="#2aa6d8"/><stop offset="0.45" stop-color="#175c9b"/><stop offset="0.62" stop-color="#0f3578"/><stop offset="0.8" stop-color="#0b2060"/><stop offset="1" stop-color="#0a1a58"/></linearGradient>
<linearGradient id="gH" gradientUnits="objectBoundingBox" x1="0.12" y1="0.1" x2="0.62" y2="0.85"><stop offset="0" stop-color="#d5e4f0" stop-opacity="0.5"/><stop offset="0.4" stop-color="#bcd8ea" stop-opacity="0.22"/><stop offset="0.8" stop-color="#9cc8e4" stop-opacity="0.05"/><stop offset="1" stop-color="#9cc8e4" stop-opacity="0.02"/></linearGradient>
<clipPath id="cS"><path d="M422.7 549.3 A303.0 303.0 0 0 1 921.0 350.0 C915.7 349.9 904.2 349.9 889.0 349.5 C873.8 349.1 848.5 347.4 830.0 347.4 C811.5 347.4 792.8 347.4 778.0 349.3 C763.2 351.2 753.3 353.9 741.0 358.5 C728.7 363.1 714.8 369.9 704.0 377.0 C693.2 384.1 684.0 393.3 676.3 401.0 C668.6 408.7 662.4 416.2 657.8 423.3 C653.2 430.4 649.7 436.6 648.5 443.7 C647.3 450.8 647.9 458.6 650.4 466.0 C652.9 473.4 657.4 480.0 663.3 488.0 C669.2 496.0 678.2 505.9 685.6 514.0 C693.0 522.0 697.7 528.1 707.8 536.3 C717.9 544.5 729.1 553.0 746.0 563.0 C762.9 573.0 786.7 588.1 809.3 596.1 C831.9 604.1 856.4 608.2 881.5 611.1 C906.6 614.0 935.9 614.3 959.7 613.7 C983.5 613.1 1013.4 608.7 1024.1 607.7 A303.0 303.0 0 0 1 525.8 807.0 C531.1 807.1 542.6 807.1 557.8 807.5 C573.0 807.9 598.3 809.6 616.8 809.6 C635.3 809.6 654.0 809.6 668.8 807.7 C683.6 805.9 693.5 803.1 705.8 798.5 C718.1 793.9 732.0 787.1 742.8 780.0 C753.6 772.9 762.8 763.7 770.5 756.0 C778.2 748.3 784.4 740.8 789.0 733.7 C793.6 726.6 797.1 720.4 798.3 713.3 C799.5 706.2 798.9 698.4 796.4 691.0 C793.9 683.6 789.4 677.0 783.5 669.0 C777.6 661.0 768.6 651.0 761.2 643.0 C753.8 635.0 749.1 628.9 739.0 620.7 C728.9 612.5 717.7 604.0 700.8 594.0 C683.9 584.0 660.1 568.9 637.5 560.9 C614.9 552.9 590.4 548.8 565.3 545.9 C540.2 543.0 510.9 542.7 487.1 543.3 C463.3 543.9 433.4 548.3 422.7 549.3 Z"/></clipPath>
<clipPath id="cB"><circle cx="723.4" cy="578.5" r="235.5"/></clipPath>
</defs>
<circle cx="723.4" cy="578.5" r="235.5" fill="url(#gB)"/>
<g id="halfA"><g clip-path="url(#cB)"><ellipse cx="789.4" cy="483.6" rx="124" ry="76" transform="rotate(22 789.4 483.6)" fill="url(#gH)"/></g><path d="M917.0 359.0 L921.0 350.0 C915.7 349.9 904.2 349.9 889.0 349.5 C873.8 349.1 848.5 347.4 830.0 347.4 C811.5 347.4 792.8 347.4 778.0 349.3 C763.2 351.2 753.3 353.9 741.0 358.5 C728.7 363.1 714.8 369.9 704.0 377.0 C693.2 384.1 684.0 393.3 676.3 401.0 C668.6 408.7 662.4 416.2 657.8 423.3 C653.2 430.4 649.7 436.6 648.5 443.7 C647.3 450.8 650.1 462.3 650.4 466.0 L651.3 468.0 C651.8 463.9 649.8 452.7 654.0 443.7 C658.2 434.7 666.4 422.3 676.3 414.0 C686.2 405.7 699.4 398.9 713.3 393.7 C727.2 388.5 746.0 384.6 759.6 382.6 C773.2 380.6 783.3 381.5 795.0 381.5 C806.7 381.5 818.8 381.6 830.0 382.6 C841.2 383.6 856.7 386.7 862.0 387.5 Z" fill="url(#gI)"/><path d="M921.0 350.0 C915.7 349.9 904.2 349.9 889.0 349.5 C873.8 349.1 848.5 347.4 830.0 347.4 C811.5 347.4 792.8 347.4 778.0 349.3 C763.2 351.2 753.3 353.9 741.0 358.5 C728.7 363.1 714.8 369.9 704.0 377.0 C693.2 384.1 684.0 393.3 676.3 401.0 C668.6 408.7 662.4 416.2 657.8 423.3 C653.2 430.4 650.0 440.3 648.5 443.7" fill="none" stroke="#505050" stroke-width="5.500"/><path d="M921 350 L917.500 359.500 C890 353.500 850 351.500 820 352 C780 353 745 361.500 712 377.500 C700 384 690 391 682 399 L676 395 C700 372 740 352 778 345 C830 342 890 345 921 350Z" fill="#808080"/></g>
<use href="#halfA" transform="rotate(180 723.4 578.5)"/>
<path d="M422.7 549.3 A303.0 303.0 0 0 1 921.0 350.0 C915.7 349.9 904.2 349.9 889.0 349.5 C873.8 349.1 848.5 347.4 830.0 347.4 C811.5 347.4 792.8 347.4 778.0 349.3 C763.2 351.2 753.3 353.9 741.0 358.5 C728.7 363.1 714.8 369.9 704.0 377.0 C693.2 384.1 684.0 393.3 676.3 401.0 C668.6 408.7 662.4 416.2 657.8 423.3 C653.2 430.4 649.7 436.6 648.5 443.7 C647.3 450.8 647.9 458.6 650.4 466.0 C652.9 473.4 657.4 480.0 663.3 488.0 C669.2 496.0 678.2 505.9 685.6 514.0 C693.0 522.0 697.7 528.1 707.8 536.3 C717.9 544.5 729.1 553.0 746.0 563.0 C762.9 573.0 786.7 588.1 809.3 596.1 C831.9 604.1 856.4 608.2 881.5 611.1 C906.6 614.0 935.9 614.3 959.7 613.7 C983.5 613.1 1013.4 608.7 1024.1 607.7 A303.0 303.0 0 0 1 525.8 807.0 C531.1 807.1 542.6 807.1 557.8 807.5 C573.0 807.9 598.3 809.6 616.8 809.6 C635.3 809.6 654.0 809.6 668.8 807.7 C683.6 805.9 693.5 803.1 705.8 798.5 C718.1 793.9 732.0 787.1 742.8 780.0 C753.6 772.9 762.8 763.7 770.5 756.0 C778.2 748.3 784.4 740.8 789.0 733.7 C793.6 726.6 797.1 720.4 798.3 713.3 C799.5 706.2 798.9 698.4 796.4 691.0 C793.9 683.6 789.4 677.0 783.5 669.0 C777.6 661.0 768.6 651.0 761.2 643.0 C753.8 635.0 749.1 628.9 739.0 620.7 C728.9 612.5 717.7 604.0 700.8 594.0 C683.9 584.0 660.1 568.9 637.5 560.9 C614.9 552.9 590.4 548.8 565.3 545.9 C540.2 543.0 510.9 542.7 487.1 543.3 C463.3 543.9 433.4 548.3 422.7 549.3 Z" fill="url(#gS)"/>
<g id="halfB"><g clip-path="url(#cS)"><path d="M482.5 461.0 A268 268 0 0 1 723.4 310.5" fill="none" stroke="#fff" stroke-opacity="0.075" stroke-width="44" stroke-linecap="round"/><path d="M640 240 L960 240 L960 420 L640 420Z" fill="url(#gT)"/><path d="M380 400 L560 400 L560 600 L380 600Z" fill="url(#gL)"/></g></g>
<use href="#halfB" transform="rotate(180 723.4 578.5)"/>
<rect x="488.500" y="344.500" width="471" height="470" fill="none" stroke="#fff" stroke-width="1"/><rect x="488.500" y="344.500" width="471" height="470" fill="none" stroke="#3c3c78" stroke-width="1" stroke-dasharray="4 4"/><g transform="translate(482.4 338.4) rotate(45)" fill="#000"><path d="M-7.6 0 L-3.1 -4.600 L-3.1 -1.800 L3.1 -1.800 L3.1 -4.600 L7.6 0 L3.1 4.600 L3.1 1.800 L-3.1 1.800 L-3.1 4.600 Z"/></g><g transform="translate(965.6 338.4) rotate(-45)" fill="#000"><path d="M-7.6 0 L-3.1 -4.600 L-3.1 -1.800 L3.1 -1.800 L3.1 -4.600 L7.6 0 L3.1 4.600 L3.1 1.800 L-3.1 1.800 L-3.1 4.600 Z"/></g><g transform="translate(482.4 820.6) rotate(-45)" fill="#000"><path d="M-7.6 0 L-3.1 -4.600 L-3.1 -1.800 L3.1 -1.800 L3.1 -4.600 L7.6 0 L3.1 4.600 L3.1 1.800 L-3.1 1.800 L-3.1 4.600 Z"/></g><g transform="translate(965.6 820.6) rotate(45)" fill="#000"><path d="M-7.6 0 L-3.1 -4.600 L-3.1 -1.800 L3.1 -1.800 L3.1 -4.600 L7.6 0 L3.1 4.600 L3.1 1.800 L-3.1 1.800 L-3.1 4.600 Z"/></g><g transform="translate(482.1 579.4) rotate(0)" fill="#000"><path d="M-6.1 0 L-1.6 -4.600 L-1.6 -1.800 L1.6 -1.800 L1.6 -4.600 L6.1 0 L1.6 4.600 L1.6 1.800 L-1.6 1.800 L-1.6 4.600 Z"/></g><g transform="translate(965.9 579.4) rotate(0)" fill="#000"><path d="M-6.1 0 L-1.6 -4.600 L-1.6 -1.800 L1.6 -1.800 L1.6 -4.600 L6.1 0 L1.6 4.600 L1.6 1.800 L-1.6 1.800 L-1.6 4.600 Z"/></g><g transform="translate(723.5 338.0) rotate(90)" fill="#bdbdbd"><path d="M-5.9 0 L-1.4 -4.600 L-1.4 -1.800 L1.4 -1.800 L1.4 -4.600 L5.9 0 L1.4 4.600 L1.4 1.800 L-1.4 1.800 L-1.4 4.600 Z"/></g><g transform="translate(723.5 821.0) rotate(90)" fill="#bdbdbd"><path d="M-5.9 0 L-1.4 -4.600 L-1.4 -1.800 L1.4 -1.800 L1.4 -4.600 L5.9 0 L1.4 4.600 L1.4 1.800 L-1.4 1.800 L-1.4 4.600 Z"/></g>
</svg>
<div class="b " style="left:1401.5px;top:131px;width:19.5px;height:896px;background:#333333;"></div>
<div class="b " style="left:392px;top:1033.5px;width:662px;height:6.5px;background:#a2a2a2;border-radius:3.5px;"></div>
<div class="b " style="left:1408px;top:433.5px;width:6px;height:309.5px;background:#a6a6a6;border-radius:3px;"></div>
<div class="b " style="left:1402.5px;top:1028.5px;width:17.5px;height:17px;background:#2c2c2c;border-radius:3px;"></div>
<svg class="ic" style="left:1403.5px;top:1030.0px;color:#8a8a8a;" width="15" height="15" viewBox="0 0 16 16"><circle cx="8" cy="4.500" r="3.500" fill="none" stroke="currentColor" stroke-width="1.200"/><circle cx="4.300" cy="11" r="3.500" fill="none" stroke="currentColor" stroke-width="1.200"/><circle cx="11.700" cy="11" r="3.500" fill="none" stroke="currentColor" stroke-width="1.200"/><circle cx="4.300" cy="11" r="1.300" fill="currentColor"/><circle cx="11.700" cy="11" r="1.300" fill="currentColor"/></svg>
<div class="b" style="left:0;top:1045.5px;width:1816px;height:21.5px;background:linear-gradient(90deg,#d5fff6 0.0px,#d5fff6 13.2px,#0b2822 13.2px,#0b2822 32.2px,#165044 32.2px,#165044 51.2px,#217867 51.2px,#217867 70.2px,#2ca089 70.2px,#2ca089 89.2px,#37c8ab 89.2px,#37c8ab 108.2px,#5fd3bc 108.2px,#5fd3bc 127.2px,#87decd 127.2px,#87decd 146.2px,#afe9dd 146.2px,#afe9dd 165.2px,#d7f4ee 165.2px,#d7f4ee 184.2px,#1c2422 184.2px,#1c2422 203.2px,#374845 203.2px,#374845 222.2px,#536c67 222.2px,#536c67 241.2px,#6f918a 241.2px,#6f918a 260.2px,#93aca7 260.2px,#93aca7 279.2px,#b7c8c4 279.2px,#b7c8c4 298.2px,#dbe3e2 298.2px,#dbe3e2 317.2px,#00222b 317.2px,#00222b 336.2px,#004455 336.2px,#004455 355.2px,#006680 355.2px,#006680 374.2px,#0088aa 374.2px,#0088aa 393.2px,#00aad4 393.2px,#00aad4 412.2px,#00ccff 412.2px,#00ccff 431.2px,#2ad4ff 431.2px,#2ad4ff 450.2px,#55ddff 450.2px,#55ddff 469.2px,#80e5ff 469.2px,#80e5ff 488.2px,#aaeeff 488.2px,#aaeeff 507.2px,#d5f6ff 507.2px,#d5f6ff 526.2px,#0b2228 526.2px,#0b2228 545.2px,#164450 545.2px,#164450 564.2px,#216778 564.2px,#216778 583.2px,#2c89a0 583.2px,#2c89a0 602.2px,#37abc8 602.2px,#37abc8 621.2px,#5fbcd3 621.2px,#5fbcd3 640.2px,#87cdde 640.2px,#87cdde 659.2px,#afdde9 659.2px,#afdde9 678.2px,#d7eef4 678.2px,#d7eef4 697.2px,#1c2224 697.2px,#1c2224 716.2px,#374548 716.2px,#374548 735.2px,#53676c 735.2px,#53676c 754.2px,#6f8a91 754.2px,#6f8a91 773.2px,#93a7ac 773.2px,#93a7ac 792.2px,#b7c4c8 792.2px,#b7c4c8 811.2px,#dbe2e3 811.2px,#dbe2e3 830.2px,#00112b 830.2px,#00112b 849.2px,#002255 849.2px,#002255 868.2px,#003380 868.2px,#003380 887.2px,#0044aa 887.2px,#0044aa 906.2px,#0055d4 906.2px,#0055d4 925.2px,#0066ff 925.2px,#0066ff 944.2px,#2a7fff 944.2px,#2a7fff 963.2px,#5599ff 963.2px,#5599ff 982.2px,#80b3ff 982.2px,#80b3ff 1001.2px,#aaccff 1001.2px,#aaccff 1020.2px,#d5e5ff 1020.2px,#d5e5ff 1039.2px,#0b1728 1039.2px,#0b1728 1058.2px,#162d50 1058.2px,#162d50 1077.2px,#214478 1077.2px,#214478 1096.2px,#2c5aa0 1096.2px,#2c5aa0 1115.2px,#3771c8 1115.2px,#3771c8 1134.2px,#5f8dd3 1134.2px,#5f8dd3 1153.2px,#87aade 1153.2px,#87aade 1172.2px,#afc6e9 1172.2px,#afc6e9 1191.2px,#d7e3f4 1191.2px,#d7e3f4 1210.2px,#1c1f24 1210.2px,#1c1f24 1229.2px,#373e48 1229.2px,#373e48 1248.2px,#535d6c 1248.2px,#535d6c 1267.2px,#6f7c91 1267.2px,#6f7c91 1286.2px,#939dac 1286.2px,#939dac 1305.2px,#b7bec8 1305.2px,#b7bec8 1324.2px,#dbdee3 1324.2px,#dbdee3 1343.2px,#00002b 1343.2px,#00002b 1362.2px,#000055 1362.2px,#000055 1381.2px,#000080 1381.2px,#000080 1400.2px,#0000aa 1400.2px,#0000aa 1419.2px,#0000d4 1419.2px,#0000d4 1438.2px,#0000ff 1438.2px,#0000ff 1457.2px,#2a2aff 1457.2px,#2a2aff 1476.2px,#5555ff 1476.2px,#5555ff 1495.2px,#8080ff 1495.2px,#8080ff 1514.2px,#aaaaff 1514.2px,#aaaaff 1533.2px,#d5d5ff 1533.2px,#d5d5ff 1552.2px,#0b0b28 1552.2px,#0b0b28 1571.2px,#161650 1571.2px,#161650 1590.2px,#212178 1590.2px,#212178 1609.2px,#2c2ca0 1609.2px,#2c2ca0 1628.2px,#3737c8 1628.2px,#3737c8 1647.2px,#5f5fd3 1647.2px,#5f5fd3 1666.2px,#8787de 1666.2px,#8787de 1685.2px,#afafe9 1685.2px,#afafe9 1704.2px,#d7d7f4 1704.2px,#d7d7f4 1723.2px,#1c1c24 1723.2px,#1c1c24 1742.2px,#373748 1742.2px,#373748 1761.2px,#53536c 1761.2px,#53536c 1780.2px,#6f6f91 1780.2px,#6f6f91 1799.2px,#9393ac 1799.2px,#9393ac 1818.2px,#b7b7c8 1818.2px,#b7b7c8 1837.2px,#dbdbe3 1837.2px,#dbdbe3 1856.2px);"></div>
<div class="b " style="left:955.5px;top:1071px;width:394.5px;height:6px;background:#a2a2a2;border-radius:3px;"></div>
<svg class="ic" style="left:1829px;top:1057px" width="8" height="12" viewBox="0 0 8 12"><path d="M7 1v10l-6-5z" fill="#eee"/></svg>
<div class="b " style="left:1404.7px;top:134px;width:12.5px;height:12px;background:#f6f6f6;border-radius:2px;box-shadow:0 0 3px 1px rgba(0,0,0,.55);"></div>
<div class="t " style="left:1408.3px;top:130.5px;color:#111;font-weight:bold;font-size:9px;">1</div>
<div class="b " style="left:1421px;top:131px;width:386px;height:888px;background:#303030;border:1px solid #262626;border-top:none;"></div>
<div class="b " style="left:1421px;top:131px;width:386px;height:35px;background:#2f2f2f;border-bottom:1px solid #222;"></div>
<svg class="ic" style="left:1421.5px;top:141.0px;color:#0c0c0c;" width="15" height="15" viewBox="0 0 16 16"><path d="M4.500 2.500 h11 l-3 2.800 h-11z M4.500 7 h11 l-3 2.800 h-11z M4.500 11.500 h11 l-3 2.800 h-11z" fill="currentColor"/></svg>
<div class="t " style="left:1438px;top:138px;color:#eee;">Objects</div>
<svg class="ic" style="left:1747.0px;top:138.0px;color:#9a9a9a;" width="11" height="11" viewBox="0 0 16 16"><rect x="0.800" y="0.800" width="14.400" height="14.400" rx="2" fill="none" stroke="currentColor" stroke-width="1.500"/><path d="M11 4 v8 l-6.500 -4z" fill="currentColor"/></svg>
<svg class="ic" style="left:1783.0px;top:138.0px;color:#9a9a9a;" width="11" height="11" viewBox="0 0 16 16"><rect x="0.800" y="0.800" width="14.400" height="14.400" rx="2" fill="none" stroke="currentColor" stroke-width="1.500"/><path d="M4.200 4.200 L11.800 11.800 M11.800 4.200 L4.200 11.800" fill="none" stroke="currentColor" stroke-width="3"/></svg>
<div class="b " style="left:1425.5px;top:168.5px;width:377.5px;height:174.5px;background:#2a2a2a;border:1px solid #1b1b1b;"></div>
<div class="b " style="left:1426.5px;top:169.5px;width:375.5px;height:24.5px;background:#2d2d2d;border-bottom:1px solid #242424;"></div>
<div class="t hd" style="left:1432.5px;top:171.5px;">V</div>
<div class="t hd" style="left:1461px;top:171.5px;">L</div>
<div class="t hd" style="left:1490px;top:171.5px;">T</div>
<div class="t hd" style="left:1518.5px;top:171.5px;">CM</div>
<div class="t hd" style="left:1550px;top:171.5px;">HL</div>
<div class="t hd" style="left:1579px;top:171.5px;">Label</div>
<div class="b " style="left:1454px;top:170px;width:1px;height:23px;background:#333;"></div>
<div class="b " style="left:1483px;top:170px;width:1px;height:23px;background:#333;"></div>
<div class="b " style="left:1512px;top:170px;width:1px;height:23px;background:#333;"></div>
<div class="b " style="left:1543px;top:170px;width:1px;height:23px;background:#333;"></div>
<div class="b " style="left:1572px;top:170px;width:1px;height:23px;background:#333;"></div>
<svg class="ic" style="left:1431.5px;top:195.0px;color:#f4f4f4;" width="17" height="17" viewBox="0 0 16 16"><path d="M0.800 9 C3 5.200 5.500 4 8 4 C10.500 4 13 5.200 15.200 9 C13 12.600 10.500 13.800 8 13.800 C5.500 13.800 3 12.600 0.800 9 Z" fill="none" stroke="currentColor" stroke-width="1.300"/><circle cx="8" cy="8.900" r="3.200" fill="currentColor"/><circle cx="8" cy="8.900" r="1.500" fill="#2a2a2a"/><circle cx="9.300" cy="7.700" r="0.900" fill="currentColor"/><path d="M3 4.800 L1.800 3 M5.400 3.500 L4.800 1.600 M8 3 V1 M10.600 3.500 L11.200 1.600 M13 4.800 L14.200 3" fill="none" stroke="currentColor" stroke-width="1"/></svg>
<svg class="ic" style="left:1461.5px;top:196.5px;color:#f4f4f4;" width="16" height="16" viewBox="0 0 16 16"><path d="M1.500 8 h9 v7 h-9z" fill="currentColor"/><path d="M8.500 8 v-3 a3 3 0 0 1 6 0 v2" fill="none" stroke="currentColor" stroke-width="1.700"/></svg>
<svg class="ic" style="left:1490.0px;top:195.5px;color:#f4f4f4;" width="16" height="16" viewBox="0 0 16 16"><path d="M2.800 1.500 h2.400 M4 1.500 v7 M2.800 8.500 h2.400" fill="none" stroke="currentColor" stroke-width="1"/><path d="M9.200 8.500 V5.500 C9.200 3.300 6.300 3.600 6.300 4.600 M9.200 6 C6.500 5.700 6 8.500 7.500 8.500 C8.500 8.500 9.200 7.800 9.200 7" fill="none" stroke="currentColor" stroke-width="1"/><path d="M11 1.500 V8.500 M11 5 C12 3.300 14.500 4 14.500 6.200 C14.500 8.500 12 9 11 7.500" fill="none" stroke="currentColor" stroke-width="1"/><path d="M4 11 h11 l-3 3 h-11z" fill="currentColor"/></svg>
<div class="b " style="left:1553.5px;top:194px;width:8.5px;height:19px;background:#f39a1f;border-radius:1px;overflow:hidden;"></div>
<div class="b " style="left:1553.5px;top:194px;width:8.5px;height:8px;background-color:#9a9a9a;background-image:linear-gradient(45deg,#bdbdbd 25%,transparent 25%,transparent 75%,#bdbdbd 75%),linear-gradient(45deg,#bdbdbd 25%,transparent 25%,transparent 75%,#bdbdbd 75%);background-size:8px 8px;background-position:0 0,4px 4px;border-radius:1px 1px 0 0;"></div>
<div class="t " style="left:1631px;top:193.5px;color:#f2f2f2;font-size:12px;letter-spacing:-0.25px;">path3876</div>
<svg class="ic" style="left:1431.5px;top:227.0px;color:#f4f4f4;" width="17" height="17" viewBox="0 0 16 16"><path d="M0.800 9 C3 5.200 5.500 4 8 4 C10.500 4 13 5.200 15.200 9 C13 12.600 10.500 13.800 8 13.800 C5.500 13.800 3 12.600 0.800 9 Z" fill="none" stroke="currentColor" stroke-width="1.300"/><circle cx="8" cy="8.900" r="3.200" fill="currentColor"/><circle cx="8" cy="8.900" r="1.500" fill="#2a2a2a"/><circle cx="9.300" cy="7.700" r="0.900" fill="currentColor"/><path d="M3 4.800 L1.800 3 M5.400 3.500 L4.800 1.600 M8 3 V1 M10.600 3.500 L11.200 1.600 M13 4.800 L14.200 3" fill="none" stroke="currentColor" stroke-width="1"/></svg>
<svg class="ic" style="left:1461.5px;top:228.5px;color:#f4f4f4;" width="16" height="16" viewBox="0 0 16 16"><path d="M1.500 8 h9 v7 h-9z" fill="currentColor"/><path d="M8.500 8 v-3 a3 3 0 0 1 6 0 v2" fill="none" stroke="currentColor" stroke-width="1.700"/></svg>
<svg class="ic" style="left:1490.0px;top:227.5px;color:#f4f4f4;" width="16" height="16" viewBox="0 0 16 16"><path d="M2.800 1.500 h2.400 M4 1.500 v7 M2.800 8.500 h2.400" fill="none" stroke="currentColor" stroke-width="1"/><path d="M9.200 8.500 V5.500 C9.200 3.300 6.300 3.600 6.300 4.600 M9.200 6 C6.500 5.700 6 8.500 7.500 8.500 C8.500 8.500 9.200 7.800 9.200 7" fill="none" stroke="currentColor" stroke-width="1"/><path d="M11 1.500 V8.500 M11 5 C12 3.300 14.500 4 14.500 6.200 C14.500 8.500 12 9 11 7.500" fill="none" stroke="currentColor" stroke-width="1"/><path d="M4 11 h11 l-3 3 h-11z" fill="currentColor"/></svg>
<div class="b " style="left:1553.5px;top:226px;width:8.5px;height:19px;background:#f39a1f;border-radius:1px;overflow:hidden;"></div>
<div class="b " style="left:1553.5px;top:226px;width:8.5px;height:8px;background-color:#9a9a9a;background-image:linear-gradient(45deg,#bdbdbd 25%,transparent 25%,transparent 75%,#bdbdbd 75%),linear-gradient(45deg,#bdbdbd 25%,transparent 25%,transparent 75%,#bdbdbd 75%);background-size:8px 8px;background-position:0 0,4px 4px;border-radius:1px 1px 0 0;"></div>
<div class="t " style="left:1631px;top:225.5px;color:#f2f2f2;font-size:12px;letter-spacing:-0.25px;">path3874</div>
<div class="b " style="left:1426.5px;top:251.5px;width:375.5px;height:32px;background:#15539e;"></div>
<svg class="ic" style="left:1431.5px;top:259.0px;color:#f4f4f4;" width="17" height="17" viewBox="0 0 16 16"><path d="M0.800 9 C3 5.200 5.500 4 8 4 C10.500 4 13 5.200 15.200 9 C13 12.600 10.500 13.800 8 13.800 C5.500 13.800 3 12.600 0.800 9 Z" fill="none" stroke="currentColor" stroke-width="1.300"/><circle cx="8" cy="8.900" r="3.200" fill="currentColor"/><circle cx="8" cy="8.900" r="1.500" fill="#2a2a2a"/><circle cx="9.300" cy="7.700" r="0.900" fill="currentColor"/><path d="M3 4.800 L1.800 3 M5.400 3.500 L4.800 1.600 M8 3 V1 M10.600 3.500 L11.200 1.600 M13 4.800 L14.200 3" fill="none" stroke="currentColor" stroke-width="1"/></svg>
<svg class="ic" style="left:1461.5px;top:260.5px;color:#f4f4f4;" width="16" height="16" viewBox="0 0 16 16"><path d="M1.500 8 h9 v7 h-9z" fill="currentColor"/><path d="M8.500 8 v-3 a3 3 0 0 1 6 0 v2" fill="none" stroke="currentColor" stroke-width="1.700"/></svg>
<svg class="ic" style="left:1490.0px;top:259.5px;color:#f4f4f4;" width="16" height="16" viewBox="0 0 16 16"><path d="M2.800 1.500 h2.400 M4 1.500 v7 M2.800 8.500 h2.400" fill="none" stroke="currentColor" stroke-width="1"/><path d="M9.200 8.500 V5.500 C9.200 3.300 6.300 3.600 6.300 4.600 M9.200 6 C6.500 5.700 6 8.500 7.500 8.500 C8.500 8.500 9.200 7.800 9.200 7" fill="none" stroke="currentColor" stroke-width="1"/><path d="M11 1.500 V8.500 M11 5 C12 3.300 14.500 4 14.500 6.200 C14.500 8.500 12 9 11 7.500" fill="none" stroke="currentColor" stroke-width="1"/><path d="M4 11 h11 l-3 3 h-11z" fill="currentColor"/></svg>
<div class="b " style="left:1553.5px;top:258px;width:8.5px;height:19px;background:#f39a1f;border-radius:1px;overflow:hidden;"></div>
<div class="b " style="left:1553.5px;top:258px;width:8.5px;height:8px;background-color:#9a9a9a;background-image:linear-gradient(45deg,#bdbdbd 25%,transparent 25%,transparent 75%,#bdbdbd 75%),linear-gradient(45deg,#bdbdbd 25%,transparent 25%,transparent 75%,#bdbdbd 75%);background-size:8px 8px;background-position:0 0,4px 4px;border-radius:1px 1px 0 0;"></div>
<div class="t " style="left:1631px;top:257.5px;color:#f2f2f2;font-size:12px;letter-spacing:-0.25px;">path3872</div>
<svg class="ic" style="left:1431.5px;top:291.0px;color:#f4f4f4;" width="17" height="17" viewBox="0 0 16 16"><path d="M0.800 9 C3 5.200 5.500 4 8 4 C10.500 4 13 5.200 15.200 9 C13 12.600 10.500 13.800 8 13.800 C5.500 13.800 3 12.600 0.800 9 Z" fill="none" stroke="currentColor" stroke-width="1.300"/><circle cx="8" cy="8.900" r="3.200" fill="currentColor"/><circle cx="8" cy="8.900" r="1.500" fill="#2a2a2a"/><circle cx="9.300" cy="7.700" r="0.900" fill="currentColor"/><path d="M3 4.800 L1.800 3 M5.400 3.500 L4.800 1.600 M8 3 V1 M10.600 3.500 L11.200 1.600 M13 4.800 L14.200 3" fill="none" stroke="currentColor" stroke-width="1"/></svg>
<svg class="ic" style="left:1461.5px;top:292.5px;color:#f4f4f4;" width="16" height="16" viewBox="0 0 16 16"><path d="M1.500 8 h9 v7 h-9z" fill="currentColor"/><path d="M8.500 8 v-3 a3 3 0 0 1 6 0 v2" fill="none" stroke="currentColor" stroke-width="1.700"/></svg>
<svg class="ic" style="left:1490.0px;top:291.5px;color:#f4f4f4;" width="16" height="16" viewBox="0 0 16 16"><path d="M4 4 h11 l-3 3 h-11z" fill="currentColor"/><path d="M4 9 h11 l-3 3 h-11z" fill="#8a8a8a"/></svg>
<div class="b " style="left:1553.5px;top:290px;width:8.5px;height:19px;background:#f39a1f;border-radius:1px;overflow:hidden;"></div>
<div class="b " style="left:1553.5px;top:290px;width:8.5px;height:8px;background-color:#9a9a9a;background-image:linear-gradient(45deg,#bdbdbd 25%,transparent 25%,transparent 75%,#bdbdbd 75%),linear-gradient(45deg,#bdbdbd 25%,transparent 25%,transparent 75%,#bdbdbd 75%);background-size:8px 8px;background-position:0 0,4px 4px;border-radius:1px 1px 0 0;"></div>
<div class="t " style="left:1631px;top:289.5px;color:#f2f2f2;font-size:12px;letter-spacing:-0.25px;">g3859</div>
<svg class="ic" style="left:1616.5px;top:294.5px" width="6" height="10" viewBox="0 0 6 10"><path d="M0.500 0.500l5 4.500l-5 4.500z" fill="#c8c8c8"/></svg>
<svg class="ic" style="left:1431.5px;top:323.0px;color:#f4f4f4;" width="17" height="17" viewBox="0 0 16 16"><path d="M0.800 9 C3 5.200 5.500 4 8 4 C10.500 4 13 5.200 15.200 9 C13 12.600 10.500 13.800 8 13.800 C5.500 13.800 3 12.600 0.800 9 Z" fill="none" stroke="currentColor" stroke-width="1.300"/><circle cx="8" cy="8.900" r="3.200" fill="currentColor"/><circle cx="8" cy="8.900" r="1.500" fill="#2a2a2a"/><circle cx="9.300" cy="7.700" r="0.900" fill="currentColor"/><path d="M3 4.800 L1.800 3 M5.400 3.500 L4.800 1.600 M8 3 V1 M10.600 3.500 L11.200 1.600 M13 4.800 L14.200 3" fill="none" stroke="currentColor" stroke-width="1"/></svg>
<svg class="ic" style="left:1461.5px;top:324.5px;color:#f4f4f4;" width="16" height="16" viewBox="0 0 16 16"><path d="M1.500 8 h9 v7 h-9z" fill="currentColor"/><path d="M8.500 8 v-3 a3 3 0 0 1 6 0 v2" fill="none" stroke="currentColor" stroke-width="1.700"/></svg>
<svg class="ic" style="left:1490.0px;top:323.5px;color:#f4f4f4;" width="16" height="16" viewBox="0 0 16 16"><path d="M4 1.500 h11 l-3 3 h-11z M4 6.500 h11 l-3 3 h-11z M4 11.500 h11 l-3 3 h-11z" fill="currentColor"/></svg>
<div class="b " style="left:1553.5px;top:322px;width:8.5px;height:19px;background:#f39a1f;border-radius:1px;overflow:hidden;"></div>
<div class="b " style="left:1553.5px;top:322px;width:8.5px;height:8px;background-color:#9a9a9a;background-image:linear-gradient(45deg,#bdbdbd 25%,transparent 25%,transparent 75%,#bdbdbd 75%),linear-gradient(45deg,#bdbdbd 25%,transparent 25%,transparent 75%,#bdbdbd 75%);background-size:8px 8px;background-position:0 0,4px 4px;border-radius:1px 1px 0 0;"></div>
<div class="t " style="left:1595px;top:321.5px;color:#f2f2f2;font-size:12px;">Background</div>
<svg class="ic" style="left:1580.5px;top:326.5px" width="6" height="10" viewBox="0 0 6 10"><path d="M0.500 0.500l5 4.500l-5 4.500z" fill="#c8c8c8"/></svg>
<svg class="ic" style="left:1436.0px;top:353.0px;color:#f0f0f0;" width="14" height="14" viewBox="0 0 16 16"><path d="M8 1 V15 M1 8 H15" fill="none" stroke="currentColor" stroke-width="2"/></svg>
<svg class="ic" style="left:1471.5px;top:353.0px;color:#f0f0f0;" width="14" height="14" viewBox="0 0 16 16"><path d="M1 8 H15" fill="none" stroke="currentColor" stroke-width="2"/></svg>
<svg class="ic" style="left:1633.0px;top:352.0px;color:#f0f0f0;" width="16" height="16" viewBox="0 0 16 16"><path d="M1 4 h7 M1 9 h6 M1 14 h13" fill="none" stroke="currentColor" stroke-width="1.700"/><path d="M14.500 1.500 l-4 3.200 l4 3.200" fill="none" stroke="currentColor" stroke-width="1.600"/></svg>
<svg class="ic" style="left:1669.0px;top:352.0px;color:#f0f0f0;" width="16" height="16" viewBox="0 0 16 16"><path d="M1.500 1.500 h13" fill="none" stroke="currentColor" stroke-width="1.800"/><path d="M2.500 13 l5.500 -6 l5.500 6" fill="none" stroke="currentColor" stroke-width="1.800"/></svg>
<svg class="ic" style="left:1705.0px;top:352.0px;color:#f0f0f0;" width="16" height="16" viewBox="0 0 16 16"><path d="M2 11.500 l6 -6.500 l6 6.500" fill="none" stroke="currentColor" stroke-width="1.800"/></svg>
<svg class="ic" style="left:1741.0px;top:352.0px;color:#f0f0f0;" width="16" height="16" viewBox="0 0 16 16"><path d="M2 4.500 l6 6.500 l6 -6.500" fill="none" stroke="currentColor" stroke-width="1.800"/></svg>
<svg class="ic" style="left:1777.0px;top:352.0px;color:#f0f0f0;" width="16" height="16" viewBox="0 0 16 16"><path d="M1.500 14.500 h13" fill="none" stroke="currentColor" stroke-width="1.800"/><path d="M2.500 3 l5.500 6 l5.500 -6" fill="none" stroke="currentColor" stroke-width="1.800"/></svg>
<div class="t " style="left:1609px;top:387px;color:#eee;">Blend mode:</div>
<div class="b combo" style="left:1686.5px;top:380.5px;width:105.5px;height:33px;"></div>
<div class="t " style="left:1698px;top:387px;color:#eee;">Normal</div>
<svg class="ic" style="left:1770px;top:394.5px" width="10" height="6" viewBox="0 0 10 6"><path d="M0.500 0.500h9l-4.500 5z" fill="#eee"/></svg>
<div class="b " style="left:1426px;top:431.5px;width:310px;height:30.5px;background:#262626;border:1px solid #1c1c1c;"></div>
<div class="t " style="left:1430px;top:437px;color:#f0f0f0;">Blur (%)</div>
<div class="t " style="left:1739px;top:437px;color:#eee;letter-spacing:-0.5px;">0.0</div>
<div class="b " style="left:1426px;top:463.5px;width:310px;height:30.5px;background:#19569f;border:1px solid #134585;"></div>
<div class="t " style="left:1430px;top:469px;color:#fff;">Opacity (%)</div>
<div class="t " style="left:1739px;top:469px;color:#eee;letter-spacing:-0.6px;">100.0</div>
<svg class="ic" style="left:1772px;top:441px" width="30" height="44" viewBox="0 0 30 44"><path d="M1 6h9" stroke="#555" stroke-width="1.500"/><path d="M18 6h10M23 1v10" stroke="#f0f0f0" stroke-width="1.500"/><path d="M1 38h9" stroke="#f0f0f0" stroke-width="1.600"/><path d="M18 38h10M23 33v10" stroke="#555" stroke-width="1.500"/></svg>
<div class="b " style="left:1421px;top:497px;width:386px;height:1px;background:#262626;"></div>
<div class="b " style="left:1421px;top:498px;width:386px;height:36px;background:#383838;"></div>
<div class="b " style="left:1422px;top:499px;width:52px;height:32px;background:#393939;border-radius:0 0 0 5px;box-shadow:0 1px 1px rgba(0,0,0,.4);"></div>
<div class="b " style="left:1474px;top:499px;width:54.5px;height:31.5px;background:#202020;border-radius:0 0 5px 0;"></div>
<svg class="ic" style="left:1430.5px;top:507.5px;color:#f0f0f0;" width="15" height="15" viewBox="0 0 16 16"><path d="M1.500 1 v14" fill="none" stroke="currentColor" stroke-width="1.400"/><path d="M4 2 h7 v2.800 h-7z M4 6.600 h10.500 v2.800 h-10.500z M4 11.200 h6 v2.800 h-6z" fill="currentColor"/></svg>
<svg class="ic" style="left:1452.0px;top:509.5px;color:#f0f0f0;" width="11" height="11" viewBox="0 0 16 16"><path d="M2 11.500 l6 -6.500 l6 6.500" fill="none" stroke="currentColor" stroke-width="2.400"/></svg>
<svg class="ic" style="left:1484.5px;top:507.5px;color:#0a0a0a;" width="15" height="15" viewBox="0 0 16 16"><path d="M4.500 2.500 h11 l-3 2.800 h-11z M4.500 7 h11 l-3 2.800 h-11z M4.500 11.500 h11 l-3 2.800 h-11z" fill="currentColor"/></svg>
<svg class="ic" style="left:1506.0px;top:509.5px;color:#f0f0f0;" width="11" height="11" viewBox="0 0 16 16"><path d="M2 11.500 l6 -6.500 l6 6.500" fill="none" stroke="currentColor" stroke-width="2.400"/></svg>
<div class="b " style="left:1421px;top:533.5px;width:386px;height:35.5px;background:#2f2f2f;border-top:1px solid #262626;border-bottom:1px solid #222;"></div>
<svg class="ic" style="left:1421.0px;top:543.0px;color:#f0f0f0;" width="16" height="16" viewBox="0 0 16 16"><path d="M12 0.700 h-11.300 v11.300" fill="none" stroke="currentColor" stroke-width="1.300"/><path d="M15.800 1.200 L8 11 L6 9.600 Z" fill="currentColor"/><path d="M5.500 10.200 l2 1.600 c0 2 -2.500 3.700 -6 3.700 c1.800 -1 2 -3.800 4 -5.300z" fill="currentColor"/></svg>
<div class="t " style="left:1438px;top:541px;color:#eee;letter-spacing:-0.07px;">Fill and Stroke (Shift+Ctrl+F)</div>
<svg class="ic" style="left:1747.0px;top:541.5px;color:#9a9a9a;" width="11" height="11" viewBox="0 0 16 16"><rect x="0.800" y="0.800" width="14.400" height="14.400" rx="2" fill="none" stroke="currentColor" stroke-width="1.500"/><path d="M11 4 v8 l-6.500 -4z" fill="currentColor"/></svg>
<svg class="ic" style="left:1783.0px;top:541.5px;color:#9a9a9a;" width="11" height="11" viewBox="0 0 16 16"><rect x="0.800" y="0.800" width="14.400" height="14.400" rx="2" fill="none" stroke="currentColor" stroke-width="1.500"/><path d="M4.200 4.200 L11.800 11.800 M11.800 4.200 L4.200 11.800" fill="none" stroke="currentColor" stroke-width="3"/></svg>
<div class="b " style="left:1425.5px;top:572.5px;width:377.5px;height:316px;background:#2b2b2b;border:1px solid #1b1b1b;"></div>
<div class="b " style="left:1426.5px;top:573.5px;width:375.5px;height:37px;background:#282828;border-bottom:1px solid #1f1f1f;"></div>
<div class="b " style="left:1446px;top:583px;width:16px;height:16px;background:#f2f2f2;"></div>
<div class="t " style="left:1466px;top:581px;font-weight:bold;color:#f4f4f4;letter-spacing:-0.6px;">Fill</div>
<div class="b " style="left:1434px;top:607.5px;width:59px;height:2px;background:#1a5fb4;"></div>
<div class="b " style="left:1513px;top:583px;width:16px;height:16px;border:1.500px solid #e8e8e8;"></div>
<div class="t hd" style="left:1533px;top:581px;letter-spacing:0;">Stroke paint</div>
<svg class="ic" style="left:1633.0px;top:583.0px;color:#e8e8e8;" width="16" height="16" viewBox="0 0 16 16"><path d="M0.500 4 h11" fill="none" stroke="currentColor" stroke-width="1.500"/><path d="M10 0.500 l5 3.500 l-5 3.500z" fill="currentColor"/><path d="M0.500 10 h11" fill="none" stroke="currentColor" stroke-width="1.500" stroke-dasharray="3 3"/><path d="M0.500 15 h15" fill="none" stroke="currentColor" stroke-width="1.300"/></svg>
<div class="t hd" style="left:1654px;top:581px;letter-spacing:0;">Stroke style</div>
<div class="b btn" style="left:1542.5px;top:618px;width:35.5px;height:33px;"></div>
<div class="b btn" style="left:1758px;top:618px;width:35.5px;height:33px;"></div>
<svg class="ic" style="left:1443.5px;top:626.0px;color:#f0f0f0;" width="17" height="17" viewBox="0 0 16 16"><path d="M4.500 4.500 L11.500 11.500 M11.500 4.500 L4.500 11.500" fill="none" stroke="currentColor" stroke-width="1.900"/></svg>
<svg class="ic" style="left:1479.5px;top:626.0px;color:#f0f0f0;" width="17" height="17" viewBox="0 0 16 16"><rect x="0.500" y="0.500" width="15" height="15" fill="#eeeeee"/></svg>
<svg class="ic" style="left:1515.5px;top:626.0px;color:#f0f0f0;" width="17" height="17" viewBox="0 0 16 16"><defs><linearGradient id="pl"><stop offset="0" stop-color="#eee"/><stop offset="0.300" stop-color="#bbb"/><stop offset="1" stop-color="#555"/></linearGradient></defs><rect x="0.500" y="0.500" width="15" height="15" fill="url(#pl)"/><rect x="0.500" y="0.500" width="2.500" height="15" fill="#f4f4f4"/></svg>
<svg class="ic" style="left:1551.5px;top:626.0px;color:#f0f0f0;" width="17" height="17" viewBox="0 0 16 16"><defs><radialGradient id="pr"><stop offset="0" stop-color="#fff"/><stop offset="0.250" stop-color="#eee"/><stop offset="0.450" stop-color="#999"/><stop offset="1" stop-color="#555"/></radialGradient></defs><rect x="1.500" y="1.500" width="13" height="13" fill="url(#pr)"/><rect x="6" y="6" width="4" height="4" fill="#fff"/></svg>
<svg class="ic" style="left:1587.5px;top:626.0px;color:#f0f0f0;" width="17" height="17" viewBox="0 0 16 16"><rect x="0.800" y="0.800" width="14.400" height="14.400" rx="1" fill="#2b2b2b" stroke="#eee" stroke-width="1.300"/><rect x="1.500" y="1.500" width="6.500" height="6.500" fill="#a0a0a0"/><rect x="8" y="8" width="6.500" height="6.500" fill="#a0a0a0"/></svg>
<svg class="ic" style="left:1623.5px;top:626.0px;color:#f0f0f0;" width="17" height="17" viewBox="0 0 16 16"><path d="M0.500 0.500 h15 v15 h-15z" fill="#eee"/><path d="M4 0.500 l3 3.500 l-3 3.500 l-3 -3.500z M12 0.500 l3 3.500 l-3 3.500 l-3 -3.500z M4 8.500 l3 3.500 l-3 3.500 l-3 -3.500z M12 8.500 l3 3.500 l-3 3.500 l-3 -3.500z M8 4.500 l3 3.500 l-3 3.500 l-3 -3.500z" fill="#2c2c2c"/><path d="M0.500 4.500 l2.500 3.500 l-2.500 3.500z M15.500 4.500 l-2.500 3.500 l2.500 3.500z M5 0.500 h6 l-3 3z M5 15.500 h6 l-3 -3z" fill="#2c2c2c"/></svg>
<svg class="ic" style="left:1659.5px;top:626.0px;color:#f0f0f0;" width="17" height="17" viewBox="0 0 16 16"><rect x="1.200" y="1.200" width="13.600" height="13.600" fill="#eee" stroke="#aaa" stroke-width="1.600"/></svg>
<svg class="ic" style="left:1695.5px;top:626.0px;color:#f0f0f0;" width="17" height="17" viewBox="0 0 16 16"><path d="M4.300 5.500 C4.300 1.200 11.800 1.200 11.800 5.300 C11.800 8 8.200 7.800 8.200 11" fill="none" stroke="currentColor" stroke-width="2.600"/><circle cx="8.200" cy="14.300" r="1.700" fill="currentColor"/></svg>
<svg class="ic" style="left:1731.0px;top:626.0px;color:#f0f0f0;" width="17" height="17" viewBox="0 0 16 16"><path d="M8 15 C3 12.500 0.500 8.500 0.800 4.500 C1 1 5 -0.500 8 3 C11 -0.500 15 1 15.200 4.500 C15.500 8.500 13 12.500 8 15 Z" fill="currentColor"/><path d="M8 12.500 C5.500 11 4.500 8.500 5 6 C5.500 4 7 3.500 8 5.500 C9 3.500 10.500 4 11 6 C11.500 8.500 10.500 11 8 12.500 Z" fill="#2b2b2b"/></svg>
<svg class="ic" style="left:1767.0px;top:626.0px;color:#f0f0f0;" width="17" height="17" viewBox="0 0 16 16"><path d="M8 15 C3 12.500 0.500 8.500 0.800 4.500 C1 1 5 -0.500 8 3 C11 -0.500 15 1 15.200 4.500 C15.500 8.500 13 12.500 8 15 Z" fill="currentColor"/></svg>
<div class="t " style="left:1434.5px;top:658px;font-weight:bold;color:#f2f2f2;letter-spacing:-0.3px;">Radial gradient</div>
<div class="b " style="left:1430.5px;top:683.5px;width:367px;height:149px;background:#2a2a2a;border:1px solid #1c1c1c;"></div>
<div class="b " style="left:1431.5px;top:684.5px;width:365px;height:24px;background:#2d2d2d;border-bottom:1px solid #242424;"></div>
<div class="b " style="left:1510px;top:685px;width:1px;height:23px;background:#353535;"></div>
<div class="b " style="left:1690.5px;top:685px;width:1px;height:23px;background:#353535;"></div>
<div class="t hd" style="left:1437px;top:685.5px;">Gradient</div>
<div class="t hd" style="left:1517px;top:685.5px;">Name</div>
<div class="t hd" style="left:1696.5px;top:685.5px;">#</div>
<div class="b " style="left:1439px;top:709.2px;width:64px;height:15.7px;background:linear-gradient(90deg,#ececec,#d0d0d0 35%,#8a8a8a 75%,#2a2a2a 93%,#0a0a0a);"></div>
<div class="t " style="left:1515px;top:706.9px;color:#f4f4f4;letter-spacing:-0.5px;">3945</div>
<div class="t " style="left:1695px;top:706.9px;color:#f4f4f4;">1</div>
<div class="b " style="left:1439px;top:727.8px;width:64px;height:18.1px;background-image:linear-gradient(45deg,#c9c9c9 25%,transparent 25%,transparent 75%,#c9c9c9 75%),linear-gradient(45deg,#c9c9c9 25%,transparent 25%,transparent 75%,#c9c9c9 75%);background-size:8px 8px;background-position:0 0,4px 4px;background-color:#e6e6e6;"></div>
<div class="b " style="left:1439px;top:727.8px;width:64px;height:18.1px;background:linear-gradient(90deg,rgba(255,255,255,.25),rgba(255,255,255,.8) 45%,#fff 80%);"></div>
<div class="t " style="left:1515px;top:727.9px;color:#f4f4f4;letter-spacing:-0.5px;">3837</div>
<div class="t " style="left:1695px;top:727.9px;color:#f4f4f4;">2</div>
<div class="b " style="left:1439px;top:748.8px;width:64px;height:18.1px;background:linear-gradient(90deg,#ececec,#cfcfcf 35%,#8c8c8c 72%,#303030 92%,#0a0a0a);"></div>
<div class="t " style="left:1515px;top:748.9px;color:#f4f4f4;letter-spacing:-0.5px;">3864</div>
<div class="t " style="left:1695px;top:748.9px;color:#f4f4f4;">1</div>
<div class="b " style="left:1439px;top:769.8px;width:64px;height:18.1px;background:linear-gradient(90deg,#35c8f2,#2aa6d2 35%,#1b6aa6 70%,#0f3379 92%,#0a1f5c);"></div>
<div class="t " style="left:1515px;top:769.9px;color:#f4f4f4;letter-spacing:-0.5px;">3808</div>
<div class="t " style="left:1695px;top:769.9px;color:#f4f4f4;">4</div>
<div class="b " style="left:1439px;top:790.8px;width:64px;height:18.1px;background:linear-gradient(90deg,#1e1e1e,#555 12%,#9c9c9c 40%,#8f8f8f 70%,#6e6e6e);"></div>
<div class="t " style="left:1515px;top:790.9px;color:#f4f4f4;letter-spacing:-0.5px;">3797</div>
<div class="t " style="left:1695px;top:790.9px;color:#f4f4f4;">4</div>
<div class="b " style="left:1431.5px;top:811.4px;width:365px;height:21px;background:#15539e;"></div>
<div class="b " style="left:1439px;top:811.8px;width:64px;height:18.1px;background:linear-gradient(90deg,#3ad0f7,#2aa3cc 35%,#17609a 70%,#0c2a6c 92%,#0a1a55);"></div>
<div class="t " style="left:1515px;top:811.9px;color:#f4f4f4;letter-spacing:-0.5px;">3836</div>
<div class="t " style="left:1695px;top:811.9px;color:#f4f4f4;">2</div>
<svg class="ic" style="left:1441.0px;top:847.5px;color:#f0f0f0;" width="14" height="14" viewBox="0 0 16 16"><path d="M8 1 V15 M1 8 H15" fill="none" stroke="currentColor" stroke-width="2"/></svg>
<svg class="ic" style="left:1476.5px;top:847.0px;color:#f0f0f0;" width="15" height="15" viewBox="0 0 16 16"><path d="M11.500 1.500 L14.500 4.500 L12.800 6.200 L9.800 3.200 Z M9 4 L12 7 L5 14 L1.500 14.500 L2 11 Z" fill="currentColor"/></svg>
<div class="t " style="left:1609px;top:903px;color:#eee;">Blend mode:</div>
<div class="b combo" style="left:1686.5px;top:896.5px;width:105.5px;height:33px;"></div>
<div class="t " style="left:1698px;top:903px;color:#eee;">Normal</div>
<svg class="ic" style="left:1770px;top:910.5px" width="10" height="6" viewBox="0 0 10 6"><path d="M0.500 0.500h9l-4.500 5z" fill="#eee"/></svg>
<div class="b " style="left:1426px;top:938.5px;width:376px;height:1px;background:#2a2a2a;"></div>
<div class="b " style="left:1426px;top:947.5px;width:308px;height:30.5px;background:#262626;border:1px solid #1c1c1c;"></div>
<div class="t " style="left:1430px;top:953px;color:#f0f0f0;">Blur (%)</div>
<div class="t " style="left:1737px;top:953px;color:#eee;letter-spacing:-0.5px;">0.0</div>
<div class="b " style="left:1426px;top:979.5px;width:308px;height:30.5px;background:#19569f;border:1px solid #134585;"></div>
<div class="t " style="left:1430px;top:985px;color:#fff;">Opacity (%)</div>
<div class="t " style="left:1737px;top:985px;color:#eee;letter-spacing:-0.6px;">100.0</div>
<svg class="ic" style="left:1772px;top:957px" width="30" height="44" viewBox="0 0 30 44"><path d="M1 6h9" stroke="#555" stroke-width="1.500"/><path d="M18 6h10M23 1v10" stroke="#f0f0f0" stroke-width="1.500"/><path d="M1 38h9" stroke="#f0f0f0" stroke-width="1.600"/><path d="M18 38h10M23 33v10" stroke="#555" stroke-width="1.500"/></svg>
<div class="b btn" style="left:1812px;top:135px;width:36px;height:33px;"></div>
<svg class="ic" style="left:1822.0px;top:144.0px;color:#f0f0f0;" width="16" height="16" viewBox="0 0 16 16"><path d="M5.800 1.850 H8 A6.150 6.150 0 0 1 8 14.150 H5.800" fill="none" stroke="currentColor" stroke-width="3.700"/><rect x="1.900" y="0" width="3.100" height="3.100" rx="0.800" fill="currentColor"/><rect x="1.900" y="12.900" width="3.100" height="3.100" rx="0.800" fill="currentColor"/><path d="M3.700 5.600 c-2.200 -0.300 -3 1.500 -1.300 2.200 c1.800 0.700 0.900 2.600 -1.800 2.200" fill="none" stroke="currentColor" stroke-width="1.200"/></svg>
<div class="b btn" style="left:1812px;top:184px;width:36px;height:33px;"></div>
<svg class="ic" style="left:1822.0px;top:193.0px;color:#f0f0f0;" width="16" height="16" viewBox="0 0 16 16"><path d="M5.800 1.850 H8 A6.150 6.150 0 0 1 8 14.150 H5.800" fill="none" stroke="currentColor" stroke-width="3.700"/><rect x="1.900" y="0" width="3.100" height="3.100" rx="0.800" fill="currentColor"/><rect x="1.900" y="12.900" width="3.100" height="3.100" rx="0.800" fill="currentColor"/><path d="M3.700 5.600 c-2.200 -0.300 -3 1.500 -1.300 2.200 c1.800 0.700 0.900 2.600 -1.800 2.200" fill="none" stroke="currentColor" stroke-width="1.200"/></svg>
<div class="b btn" style="left:1812px;top:219px;width:36px;height:33px;"></div>
<svg class="ic" style="left:1822.0px;top:228.0px;color:#f0f0f0;" width="16" height="16" viewBox="0 0 16 16"><path d="M1.500 15.500 V12.500 M1.500 10.500 V7.500 M1.500 5.500 V2 H15.500" fill="none" stroke="currentColor" stroke-width="2"/><path d="M12.500 4 l2.800 3.200 h-5.600z M3.800 12 l3.200 -2.800 v5.600z" fill="currentColor"/></svg>
<div class="b btn" style="left:1812px;top:254px;width:36px;height:33px;"></div>
<svg class="ic" style="left:1822.0px;top:263.0px;color:#f0f0f0;" width="16" height="16" viewBox="0 0 16 16"><path d="M13 1.500 V11.500" fill="none" stroke="currentColor" stroke-width="1.800" stroke-dasharray="2.600 1.700"/><path d="M1 14 H11.500" fill="none" stroke="currentColor" stroke-width="1.800" stroke-dasharray="2.600 1.700"/><path d="M11 6 v6.500 h-6.500z" fill="currentColor"/><path d="M13 11.800 l2.200 2.200 l-2.200 2.200 l-2.200 -2.200z" fill="currentColor"/></svg>
<div class="b btn" style="left:1812px;top:289px;width:36px;height:33px;"></div>
<svg class="ic" style="left:1822.0px;top:298.0px;color:#f0f0f0;" width="16" height="16" viewBox="0 0 16 16"><path d="M7 2 H14 V14 H7" fill="none" stroke="currentColor" stroke-width="1.600" stroke-dasharray="2.600 1.700"/><path d="M4 3.500 V12.500" fill="none" stroke="currentColor" stroke-width="1.700"/><path d="M1 5 l3 -3.500 l3 3.500z M1 11 l3 3.500 l3 -3.500z" fill="currentColor"/><path d="M4 8 h5.500" fill="none" stroke="currentColor" stroke-width="1.500"/><path d="M8.500 5.500 l3 2.500 l-3 2.500z" fill="currentColor"/></svg>
<div class="b btn" style="left:1812px;top:324px;width:36px;height:33px;"></div>
<svg class="ic" style="left:1822.0px;top:333.0px;color:#f0f0f0;" width="16" height="16" viewBox="0 0 16 16"><rect x="2" y="2" width="12" height="12" fill="none" stroke="currentColor" stroke-width="1.600" stroke-dasharray="2.600 1.900" stroke-dashoffset="1.300"/><path d="M8 4 V12 M4 8 H12" fill="none" stroke="currentColor" stroke-width="1.800"/></svg>
<div class="b btn" style="left:1812px;top:373px;width:36px;height:33px;"></div>
<svg class="ic" style="left:1822.0px;top:382.0px;color:#f0f0f0;" width="16" height="16" viewBox="0 0 16 16"><path d="M5.800 1.850 H8 A6.150 6.150 0 0 1 8 14.150 H5.800" fill="none" stroke="currentColor" stroke-width="3.700"/><rect x="1.900" y="0" width="3.100" height="3.100" rx="0.800" fill="currentColor"/><rect x="1.900" y="12.900" width="3.100" height="3.100" rx="0.800" fill="currentColor"/><path d="M3.700 5.600 c-2.200 -0.300 -3 1.500 -1.300 2.200 c1.800 0.700 0.900 2.600 -1.800 2.200" fill="none" stroke="currentColor" stroke-width="1.200"/></svg>
<div class="b btn" style="left:1812px;top:409px;width:36px;height:33px;"></div>
<svg class="ic" style="left:1822.0px;top:418.0px;color:#f0f0f0;" width="16" height="16" viewBox="0 0 16 16"><path d="M2 15 C2 8.500 4.500 5.500 8 5.500 C11.500 5.500 14 8.500 14 15" fill="none" stroke="currentColor" stroke-width="1.300"/><path d="M6.500 1.500 h3 v3 h-3z" fill="#bdbdbd"/><circle cx="2.800" cy="3" r="1.100" fill="#bdbdbd"/><circle cx="13.200" cy="3" r="1.100" fill="#bdbdbd"/><path d="M3 3 H13" stroke="#bdbdbd" stroke-width=".7"/></svg>
<div class="b btn" style="left:1812px;top:443px;width:36px;height:33px;"></div>
<svg class="ic" style="left:1822.0px;top:452.0px;color:#f0f0f0;" width="16" height="16" viewBox="0 0 16 16"><path d="M1.500 14.500 L14.500 1.500 M1 9.500 L15 6.500" fill="none" stroke="currentColor" stroke-width="1.300"/><circle cx="8" cy="8" r="2.300" fill="currentColor"/></svg>
<div class="b btn" style="left:1812px;top:478px;width:36px;height:33px;"></div>
<svg class="ic" style="left:1822.0px;top:487.0px;color:#f0f0f0;" width="16" height="16" viewBox="0 0 16 16"><path d="M2 1.500 C7.500 2 10.500 5 11 10" fill="none" stroke="currentColor" stroke-width="1.300"/><path d="M15 7.500 C14.500 11 12 13 8 13.500" fill="none" stroke="currentColor" stroke-width="1.300"/><circle cx="8.500" cy="13" r="1.700" fill="currentColor"/><path d="M6 14.500 l1.500 -3 l2.500 1.500z" fill="currentColor"/></svg>
<div class="b btn" style="left:1812px;top:514px;width:36px;height:33px;"></div>
<svg class="ic" style="left:1822.0px;top:523.0px;color:#f0f0f0;" width="16" height="16" viewBox="0 0 16 16"><path d="M2 15 C2 8.500 4.500 5 8 5 C11.500 5 14 8.500 14 15" fill="none" stroke="currentColor" stroke-width="1.300"/><circle cx="8" cy="4.200" r="2" fill="currentColor"/></svg>
<div class="b btn" style="left:1812px;top:548px;width:36px;height:33px;"></div>
<svg class="ic" style="left:1822.0px;top:557.0px;color:#f0f0f0;" width="16" height="16" viewBox="0 0 16 16"><path d="M4 3 V13" fill="none" stroke="currentColor" stroke-width="1.600"/><path d="M1.200 4.800 l2.800 -3.500 l2.800 3.500z M1.200 11.200 l2.800 3.500 l2.800 -3.500z" fill="currentColor"/><path d="M4 8 h4" fill="none" stroke="currentColor" stroke-width="1.300"/><path d="M7 5.800 l2.800 2.200 l-2.800 2.200z" fill="currentColor"/><path d="M12.500 1 V15" fill="none" stroke="currentColor" stroke-width="1.300"/><circle cx="12.500" cy="8" r="2.100" fill="currentColor"/></svg>
<div class="b btn" style="left:1812px;top:597px;width:36px;height:33px;"></div>
<svg class="ic" style="left:1822.0px;top:606.0px;color:#f0f0f0;" width="16" height="16" viewBox="0 0 16 16"><path d="M5.800 1.850 H8 A6.150 6.150 0 0 1 8 14.150 H5.800" fill="none" stroke="currentColor" stroke-width="3.700"/><rect x="1.900" y="0" width="3.100" height="3.100" rx="0.800" fill="currentColor"/><rect x="1.900" y="12.900" width="3.100" height="3.100" rx="0.800" fill="currentColor"/><path d="M3.700 5.600 c-2.200 -0.300 -3 1.500 -1.300 2.200 c1.800 0.700 0.900 2.600 -1.800 2.200" fill="none" stroke="currentColor" stroke-width="1.200"/></svg>
<div class="b btn" style="left:1812px;top:631px;width:36px;height:33px;"></div>
<svg class="ic" style="left:1822.0px;top:640.0px;color:#f0f0f0;" width="16" height="16" viewBox="0 0 16 16"><path d="M2.500 3 h4.500 v4 h-4.500z M9 3 h4.500 v4 h-4.500z M2.500 9 h4.500 v4 h-4.500z M9 9 h4.500 v4 h-4.500z" fill="currentColor"/><path d="M8 1 V15 M1 8 H15" fill="none" stroke="currentColor" stroke-width="1"/></svg>
<div class="b btn" style="left:1812px;top:667px;width:36px;height:33px;"></div>
<svg class="ic" style="left:1822.0px;top:676.0px;color:#f0f0f0;" width="16" height="16" viewBox="0 0 16 16"><path d="M3.500 6 C3.500 2.500 8 1 11 3.500" fill="none" stroke="currentColor" stroke-width="1.600"/><path d="M1 4 l5 0 l-2.700 3.500z" fill="currentColor"/><path d="M9.500 7 V15.500 M5.500 11.500 H14" fill="none" stroke="currentColor" stroke-width="1"/><rect x="7" y="9" width="5" height="5" fill="none" stroke="currentColor" stroke-width="1.100" stroke-dasharray="1.200 1"/></svg>
<svg class="ic" style="left:1822.0px;top:710.0px;color:#f0f0f0;" width="16" height="16" viewBox="0 0 16 16"><path d="M8.500 1.500 L13.500 12 h-2.300 l-1 -2.400 h-4.400 l-1 2.400 h-2.300 L7.500 1.500 Z M6.600 7.800 h2.800 L8 4.400 Z" fill="currentColor"/><path d="M2 14 H15" fill="none" stroke="currentColor" stroke-width="1.200"/><path d="M2 11.800 l2 2.200 l-2 2.200 l-2 -2.200z" fill="currentColor"/></svg>
<div class="b btn" style="left:1812px;top:751px;width:36px;height:33px;"></div>
<svg class="ic" style="left:1822.0px;top:760.0px;color:#f0f0f0;" width="16" height="16" viewBox="0 0 16 16"><rect x="3" y="1.500" width="10.500" height="13" fill="none" stroke="currentColor" stroke-width="1.300"/></svg>
<div class="b btn" style="left:1812px;top:785px;width:36px;height:33px;"></div>
<svg class="ic" style="left:1822.0px;top:794.0px;color:#f0f0f0;" width="16" height="16" viewBox="0 0 16 16"><path d="M1.500 1.500 H14.500 V14.500 H1.500 Z M4.100 1.500 V14.500 M6.700 1.500 V14.500 M9.300 1.500 V14.500 M11.900 1.500 V14.500 M1.500 4.100 H14.500 M1.500 6.700 H14.500 M1.500 9.300 H14.500 M1.500 11.900 H14.500" fill="none" stroke="currentColor" stroke-width="1.050"/></svg>
<div class="b btn" style="left:1812px;top:821px;width:36px;height:33px;"></div>
<svg class="ic" style="left:1822.0px;top:830.0px;color:#f0f0f0;" width="16" height="16" viewBox="0 0 16 16"><path d="M5.500 1 V15 M1 9.500 H15" fill="none" stroke="currentColor" stroke-width="1.200"/></svg>
</div></body></html>
